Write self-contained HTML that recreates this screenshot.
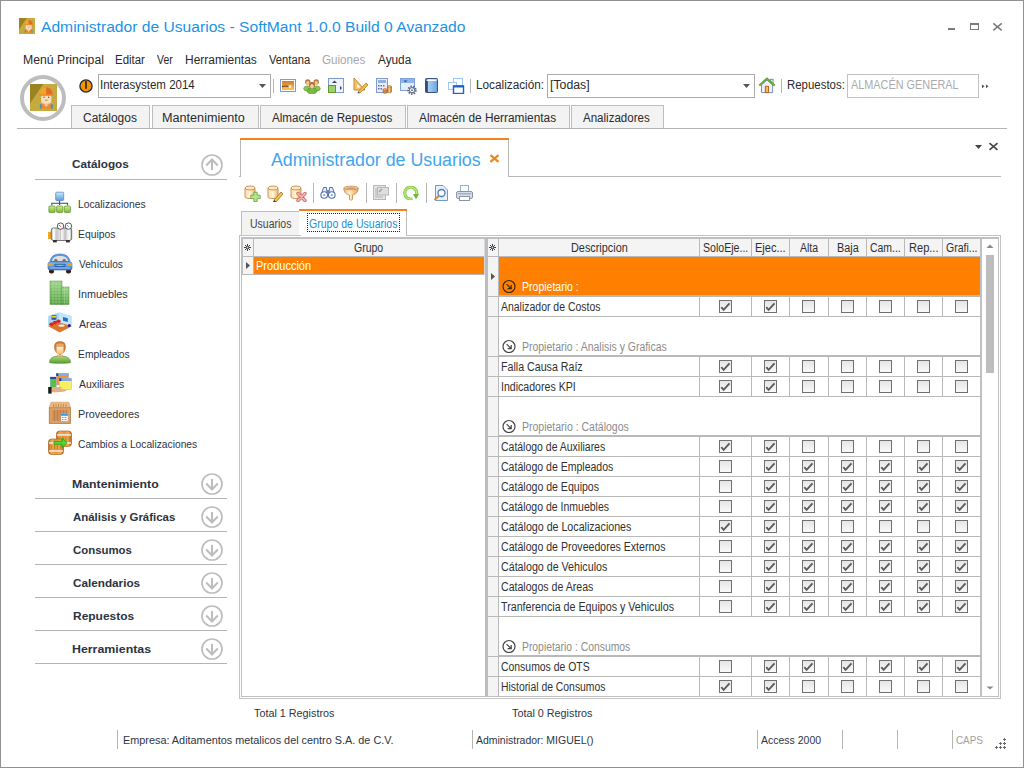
<!DOCTYPE html>
<html><head><meta charset="utf-8"><title>Administrador de Usuarios</title>
<style>
html,body{margin:0;padding:0;background:#fff;}
body{width:1024px;height:768px;position:relative;overflow:hidden;font-family:'Liberation Sans', sans-serif;}
</style></head><body>
<div style="position:absolute;left:0px;top:0px;width:1024px;height:768px;box-sizing:border-box;border:1px solid #919191;"></div>
<svg style="position:absolute;left:19px;top:18px" width="16" height="16" viewBox="0 0 27 27"><rect width="27" height="27" fill="#c5aa3f"/><path d="M0 0H13.2L0 19.6Z" fill="#9a8320"/>
<rect x="14" y="18.5" width="4.6" height="3" fill="#ecc9a0"/>
<rect x="10.5" y="20.2" width="11.6" height="4.4" fill="#f08a2c"/><path d="M14 20.2L16.3 23L18.6 20.2Z" fill="#f3d2a8"/>
<rect x="9.8" y="20.2" width="2" height="4.4" fill="#4b8fd0"/><rect x="20.8" y="20.2" width="2" height="4.4" fill="#4b8fd0"/>
<rect x="11.2" y="10" width="10.2" height="9.6" rx="3.2" fill="#f6dfb8"/>
<circle cx="14" cy="13.2" r="0.7" fill="#7a4a30"/><circle cx="18.6" cy="13.2" r="0.7" fill="#7a4a30"/><ellipse cx="16.3" cy="16.3" rx="1.6" ry="0.7" fill="#d8907e"/>
<path d="M9.8 11.2C9.8 6 12.5 3.4 16.25 3.4V11.2Z" fill="#f6a323"/><path d="M16.25 3.4C20 3.4 22.7 6 22.7 11.2H16.25Z" fill="#e8682a"/>
<rect x="9.4" y="10.2" width="13.7" height="1.6" fill="#ef8a28"/></svg>
<div style="position:absolute;left:948px;top:28px;width:7px;height:2px;background:#7a7a7a;"></div>
<div style="position:absolute;left:970px;top:23px;width:9px;height:7px;box-sizing:border-box;border:1px solid #7a7a7a;border-top-width:2px;"></div>
<svg style="position:absolute;left:992px;top:22px;" width="12" height="10" viewBox="0 0 12 10"><path d="M1.3 1.3L9.7 8.3M9.7 1.3L1.3 8.3" stroke="#7a7a7a" stroke-width="1.5"/></svg>
<svg style="position:absolute;left:20px;top:75px;" width="46" height="46" viewBox="0 0 46 46"><circle cx="23" cy="23" r="21" fill="#fff" stroke="#bdbdbd" stroke-width="4"/></svg>
<svg style="position:absolute;left:30px;top:84px;" width="27" height="27" viewBox="0 0 27 27"><rect width="27" height="27" fill="#c5aa3f"/><path d="M0 0H13.2L0 19.6Z" fill="#9a8320"/>
<rect x="14" y="18.5" width="4.6" height="3" fill="#ecc9a0"/>
<rect x="10.5" y="20.2" width="11.6" height="4.4" fill="#f08a2c"/><path d="M14 20.2L16.3 23L18.6 20.2Z" fill="#f3d2a8"/>
<rect x="9.8" y="20.2" width="2" height="4.4" fill="#4b8fd0"/><rect x="20.8" y="20.2" width="2" height="4.4" fill="#4b8fd0"/>
<rect x="11.2" y="10" width="10.2" height="9.6" rx="3.2" fill="#f6dfb8"/>
<circle cx="14" cy="13.2" r="0.7" fill="#7a4a30"/><circle cx="18.6" cy="13.2" r="0.7" fill="#7a4a30"/><ellipse cx="16.3" cy="16.3" rx="1.6" ry="0.7" fill="#d8907e"/>
<path d="M9.8 11.2C9.8 6 12.5 3.4 16.25 3.4V11.2Z" fill="#f6a323"/><path d="M16.25 3.4C20 3.4 22.7 6 22.7 11.2H16.25Z" fill="#e8682a"/>
<rect x="9.4" y="10.2" width="13.7" height="1.6" fill="#ef8a28"/></svg>
<svg style="position:absolute;left:79px;top:79px;" width="14" height="14" viewBox="0 0 14 14"><circle cx="7" cy="7" r="6.1" fill="#f59300" stroke="#1c2838" stroke-width="1.3"/><rect x="6" y="2" width="2" height="7.8" fill="#5a3400"/></svg>
<div style="position:absolute;left:98px;top:74px;width:173px;height:24px;box-sizing:border-box;border:1px solid #acacac;background:#fff;"></div>
<svg style="position:absolute;left:259px;top:84px;" width="8" height="5" viewBox="0 0 8 5"><path d="M0 0H7L3.5 4Z" fill="#555"/></svg>
<div style="position:absolute;left:273px;top:79px;width:1px;height:14px;background:#b5b5b5;"></div>
<svg style="position:absolute;left:280px;top:79px;" width="16" height="13" viewBox="0 0 16 13"><rect x="0.5" y="0.5" width="15" height="12" fill="#fff" stroke="#7f9ad4"/>
<defs><linearGradient id="gimg" x1="0" y1="0" x2="0" y2="1"><stop offset="0" stop-color="#d27a2a"/><stop offset="0.55" stop-color="#f0a040"/><stop offset="1" stop-color="#f6c860"/></linearGradient></defs>
<rect x="2" y="2" width="12" height="9" fill="url(#gimg)"/><path d="M2 7.5Q6 6.5 9 7.5" stroke="#5a3a20" stroke-width="1" fill="none"/><circle cx="10" cy="7.6" r="1.5" fill="#fff6d0"/></svg>
<svg style="position:absolute;left:303px;top:78px;" width="18" height="16" viewBox="0 0 18 16"><ellipse cx="4.5" cy="10.5" rx="3.8" ry="2.6" fill="#8cc456" stroke="#5a9a30" stroke-width="0.6"/><ellipse cx="13.5" cy="10.5" rx="3.8" ry="2.6" fill="#8cc456" stroke="#5a9a30" stroke-width="0.6"/>
<circle cx="4.8" cy="4" r="2.7" fill="#b9773e"/><ellipse cx="4.8" cy="5" rx="1.7" ry="2" fill="#f2c894"/><circle cx="13.2" cy="4" r="2.7" fill="#b9773e"/><ellipse cx="13.2" cy="5" rx="1.7" ry="2" fill="#f2c894"/>
<ellipse cx="9" cy="13" rx="4.8" ry="2.8" fill="#78b840" stroke="#4a8a28" stroke-width="0.6"/><circle cx="9" cy="7" r="3" fill="#b06a34"/><ellipse cx="9" cy="8.2" rx="1.9" ry="2.3" fill="#f4cc98"/></svg>
<svg style="position:absolute;left:328px;top:78px;" width="16" height="15" viewBox="0 0 16 15"><rect x="0.5" y="0.5" width="15" height="14" fill="#eef2fb" stroke="#7f9ad4"/>
<path d="M4 5L6.5 2.5L9 5Z" fill="#34446e"/><path d="M12 8L14 10L12 12Z" fill="#34446e"/>
<rect x="0.5" y="7.5" width="7" height="7" fill="#9fd070" stroke="#5e9a2e"/></svg>
<svg style="position:absolute;left:353px;top:77px;" width="16" height="17" viewBox="0 0 16 17"><path d="M1 1L1 13L12 13Z" fill="#f2c070" stroke="#c98a2e" stroke-width="1"/><path d="M4 7L4 10.5L7.5 10.5Z" fill="#fff"/>
<path d="M5 15L13 6L15 8L7 16Z" fill="#f4c04a" stroke="#b07a20" stroke-width="0.8"/><path d="M4.5 16.5L5 15L7 16Z" fill="#23345a"/></svg>
<svg style="position:absolute;left:376px;top:78px;" width="17" height="16" viewBox="0 0 17 16"><rect x="0.5" y="0.5" width="11" height="14" fill="#e8eefa" stroke="#7f9ad4"/><rect x="2" y="2" width="8" height="3" fill="#8fb0e0"/>
<g fill="#5a6ea0"><rect x="2" y="7" width="1.5" height="1.5"/><rect x="4.5" y="7" width="1.5" height="1.5"/><rect x="2" y="10" width="1.5" height="1.5"/><rect x="4.5" y="10" width="1.5" height="1.5"/></g>
<rect x="7" y="7" width="1.5" height="1.5" fill="#e04040"/>
<path d="M7 11.5V14.5C7 15.6 11 15.6 11 14.5V11.5Z" fill="#d08a40" stroke="#a05a20" stroke-width="0.6"/><ellipse cx="9" cy="11.5" rx="2" ry="0.9" fill="#f2c080" stroke="#a05a20" stroke-width="0.6"/>
<path d="M11.5 8.5V14C11.5 15.1 15.5 15.1 15.5 14V8.5Z" fill="#d9954a" stroke="#a05a20" stroke-width="0.6"/><ellipse cx="13.5" cy="8.5" rx="2" ry="0.9" fill="#f7d090" stroke="#a05a20" stroke-width="0.6"/><rect x="12.7" y="9.5" width="1" height="5" fill="#f7e0b0"/></svg>
<svg style="position:absolute;left:400px;top:78px;" width="17" height="17" viewBox="0 0 17 17"><rect x="0.5" y="0.5" width="14" height="12" fill="#e6eefb" stroke="#7fa0d8"/><rect x="1" y="1" width="13" height="4" fill="#8db6ea"/>
<path d="M3.5 2.5H7.5L5.5 4.5Z" fill="#34508a"/>
<circle cx="12" cy="12.2" r="3.6" fill="none" stroke="#5a6680" stroke-width="2.2" stroke-dasharray="1.4 1.1"/><circle cx="12" cy="12.2" r="2.6" fill="#fff" stroke="#5a6680" stroke-width="1"/><circle cx="12" cy="12.2" r="0.9" fill="#5a6680"/></svg>
<svg style="position:absolute;left:425px;top:78px;" width="14" height="15" viewBox="0 0 14 15"><defs><linearGradient id="gbook" x1="0" y1="0" x2="1" y2="0"><stop offset="0" stop-color="#2a3e6a"/><stop offset="0.2" stop-color="#485e90"/><stop offset="0.25" stop-color="#a8cff0"/><stop offset="1" stop-color="#6aa2dc"/></linearGradient></defs>
<rect x="0.5" y="0.5" width="12" height="14" rx="1" fill="url(#gbook)" stroke="#3c5284"/><rect x="1.5" y="1.5" width="10" height="1.4" fill="#fff"/></svg>
<svg style="position:absolute;left:448px;top:78px;" width="17" height="16" viewBox="0 0 17 16"><rect x="5.5" y="0.5" width="9" height="7" fill="#fff" stroke="#9cc8f8"/><rect x="0.5" y="4.5" width="8" height="7" fill="#fff" stroke="#9cc8f8"/>
<rect x="5.5" y="8" width="10" height="7.5" fill="#fff" stroke="#1b63c8" stroke-width="1.4"/><rect x="5" y="7.5" width="11" height="2" fill="#1b63c8"/></svg>
<div style="position:absolute;left:470px;top:79px;width:1px;height:14px;background:#b5b5b5;"></div>
<div style="position:absolute;left:547px;top:74px;width:208px;height:24px;box-sizing:border-box;border:1px solid #acacac;background:#fff;"></div>
<svg style="position:absolute;left:743px;top:84px;" width="8" height="5" viewBox="0 0 8 5"><path d="M0 0H7L3.5 4Z" fill="#555"/></svg>
<svg style="position:absolute;left:758px;top:76px;" width="18" height="18" viewBox="0 0 18 18"><rect x="12.3" y="3.3" width="2.8" height="6" fill="#e8eefa" stroke="#6a82c2" stroke-width="0.9"/>
<path d="M3.5 9V16.6H14.6V9L9 4Z" fill="#eef2fa" stroke="#6a82c2" stroke-width="0.9"/>
<rect x="7.3" y="10.3" width="3.2" height="6.3" fill="#f4b860" stroke="#b85a10" stroke-width="0.9"/>
<path d="M1.3 9.4L9 2.6L16.7 9.4" fill="none" stroke="#5aa018" stroke-width="2"/><path d="M2 9L9 2.8L16 9" fill="none" stroke="#b8e070" stroke-width="0.6" stroke-dasharray="0.8 0.8"/></svg>
<div style="position:absolute;left:781px;top:79px;width:1px;height:14px;background:#b5b5b5;"></div>
<div style="position:absolute;left:847px;top:74px;width:132px;height:24px;box-sizing:border-box;border:1px solid #c2c2c2;background:#fff;"></div>
<svg style="position:absolute;left:982px;top:84px;" width="8" height="6" viewBox="0 0 8 6"><path d="M0 0.5L2.6 2.3L0 4.3Z M4 0.5L6.6 2.3L4 4.3Z" fill="#555"/></svg>
<div style="position:absolute;left:71px;top:105px;width:79px;height:24px;box-sizing:border-box;border:1px solid #bdbdbd;border-bottom:none;background:#f3f3f3;"></div>
<div style="position:absolute;left:152px;top:105px;width:107px;height:24px;box-sizing:border-box;border:1px solid #bdbdbd;border-bottom:none;background:#f3f3f3;"></div>
<div style="position:absolute;left:260px;top:105px;width:146px;height:24px;box-sizing:border-box;border:1px solid #bdbdbd;border-bottom:none;background:#f3f3f3;"></div>
<div style="position:absolute;left:407px;top:105px;width:163px;height:24px;box-sizing:border-box;border:1px solid #bdbdbd;border-bottom:none;background:#f3f3f3;"></div>
<div style="position:absolute;left:571px;top:105px;width:93px;height:24px;box-sizing:border-box;border:1px solid #bdbdbd;border-bottom:none;background:#f3f3f3;"></div>
<div style="position:absolute;left:17px;top:128px;width:990px;height:1px;background:#b4b4b4;"></div>
<svg style="position:absolute;left:201px;top:154px;" width="22" height="22" viewBox="0 0 22 22"><circle cx="11" cy="11" r="10" fill="none" stroke="#bdbdbd" stroke-width="1.7"/><path d="M5.2 11.5L11 5.5L16.8 11.5" fill="none" stroke="#bdbdbd" stroke-width="2"/><path d="M11 5.5V16" stroke="#bdbdbd" stroke-width="2"/></svg>
<div style="position:absolute;left:35px;top:179px;width:192px;height:1px;background:#b4b4b4;"></div>
<svg style="position:absolute;left:201px;top:473px;" width="22" height="22" viewBox="0 0 22 22"><circle cx="11" cy="11" r="10" fill="none" stroke="#bdbdbd" stroke-width="1.7"/><path d="M5.2 10.5L11 16.5L16.8 10.5" fill="none" stroke="#bdbdbd" stroke-width="2"/><path d="M11 6V16.5" stroke="#bdbdbd" stroke-width="2"/></svg>
<div style="position:absolute;left:35px;top:498px;width:192px;height:1px;background:#b4b4b4;"></div>
<svg style="position:absolute;left:201px;top:506px;" width="22" height="22" viewBox="0 0 22 22"><circle cx="11" cy="11" r="10" fill="none" stroke="#bdbdbd" stroke-width="1.7"/><path d="M5.2 10.5L11 16.5L16.8 10.5" fill="none" stroke="#bdbdbd" stroke-width="2"/><path d="M11 6V16.5" stroke="#bdbdbd" stroke-width="2"/></svg>
<div style="position:absolute;left:35px;top:531px;width:192px;height:1px;background:#b4b4b4;"></div>
<svg style="position:absolute;left:201px;top:539px;" width="22" height="22" viewBox="0 0 22 22"><circle cx="11" cy="11" r="10" fill="none" stroke="#bdbdbd" stroke-width="1.7"/><path d="M5.2 10.5L11 16.5L16.8 10.5" fill="none" stroke="#bdbdbd" stroke-width="2"/><path d="M11 6V16.5" stroke="#bdbdbd" stroke-width="2"/></svg>
<div style="position:absolute;left:35px;top:564px;width:192px;height:1px;background:#b4b4b4;"></div>
<svg style="position:absolute;left:201px;top:572px;" width="22" height="22" viewBox="0 0 22 22"><circle cx="11" cy="11" r="10" fill="none" stroke="#bdbdbd" stroke-width="1.7"/><path d="M5.2 10.5L11 16.5L16.8 10.5" fill="none" stroke="#bdbdbd" stroke-width="2"/><path d="M11 6V16.5" stroke="#bdbdbd" stroke-width="2"/></svg>
<div style="position:absolute;left:35px;top:597px;width:192px;height:1px;background:#b4b4b4;"></div>
<svg style="position:absolute;left:201px;top:605px;" width="22" height="22" viewBox="0 0 22 22"><circle cx="11" cy="11" r="10" fill="none" stroke="#bdbdbd" stroke-width="1.7"/><path d="M5.2 10.5L11 16.5L16.8 10.5" fill="none" stroke="#bdbdbd" stroke-width="2"/><path d="M11 6V16.5" stroke="#bdbdbd" stroke-width="2"/></svg>
<div style="position:absolute;left:35px;top:630px;width:192px;height:1px;background:#b4b4b4;"></div>
<svg style="position:absolute;left:201px;top:638px;" width="22" height="22" viewBox="0 0 22 22"><circle cx="11" cy="11" r="10" fill="none" stroke="#bdbdbd" stroke-width="1.7"/><path d="M5.2 10.5L11 16.5L16.8 10.5" fill="none" stroke="#bdbdbd" stroke-width="2"/><path d="M11 6V16.5" stroke="#bdbdbd" stroke-width="2"/></svg>
<div style="position:absolute;left:35px;top:663px;width:192px;height:1px;background:#b4b4b4;"></div>
<svg style="position:absolute;left:44px;top:188px;" width="32" height="32" viewBox="0 0 32 32"><defs><linearGradient id="gloc" x1="0" y1="0" x2="0" y2="1"><stop offset="0" stop-color="#c8ecfc"/><stop offset="1" stop-color="#5a9ce0"/></linearGradient><linearGradient id="ggrn" x1="0" y1="0" x2="0" y2="1"><stop offset="0" stop-color="#d0f090"/><stop offset="1" stop-color="#78b828"/></linearGradient></defs>
<path d="M15.6 12.5V17M7.8 17.2V15.3H23.5V17.2" fill="none" stroke="#3c4a6a" stroke-width="1.1"/>
<rect x="11.7" y="4.2" width="8" height="8.3" rx="1" fill="url(#gloc)" stroke="#5a7ab0" stroke-width="0.7"/>
<rect x="4.9" y="18" width="6.2" height="6.6" rx="1" fill="url(#ggrn)" stroke="#5a8a30" stroke-width="0.7"/><rect x="12.6" y="18" width="6.2" height="6.6" rx="1" fill="url(#ggrn)" stroke="#5a8a30" stroke-width="0.7"/><rect x="20.2" y="18" width="6.2" height="6.6" rx="1" fill="url(#ggrn)" stroke="#5a8a30" stroke-width="0.7"/></svg>
<svg style="position:absolute;left:44px;top:218px;" width="32" height="32" viewBox="0 0 32 32"><defs><linearGradient id="gcomp" x1="0" y1="0" x2="1" y2="0"><stop offset="0" stop-color="#bbb"/><stop offset="0.12" stop-color="#fff"/><stop offset="0.3" stop-color="#ccc"/><stop offset="0.5" stop-color="#f4f4f4"/><stop offset="0.7" stop-color="#ccc"/><stop offset="0.88" stop-color="#fff"/><stop offset="1" stop-color="#aaa"/></linearGradient></defs>
<rect x="4" y="14" width="3.2" height="7" fill="#f2a81e"/>
<rect x="7.3" y="10" width="20.4" height="12.5" rx="2.2" fill="url(#gcomp)" stroke="#555" stroke-width="0.8"/>
<path d="M12 10.5V22M16.5 10.5V22M21 10.5V22" stroke="#b0b0b0" stroke-width="0.6"/>
<rect x="9" y="22" width="3.8" height="2.4" fill="#333"/><rect x="22" y="22" width="3.8" height="2.4" fill="#333"/>
<circle cx="16.5" cy="8.1" r="3.2" fill="#fff" stroke="#444" stroke-width="0.9"/><circle cx="24.4" cy="8.1" r="3.2" fill="#fff" stroke="#444" stroke-width="0.9"/>
<path d="M15.3 7.2L16.8 8.7" stroke="#e01010" stroke-width="1"/><path d="M23.2 7.2L24.7 8.7" stroke="#3a8ae0" stroke-width="1"/></svg>
<svg style="position:absolute;left:44px;top:248px;" width="32" height="32" viewBox="0 0 32 32"><defs><linearGradient id="gcar" x1="0" y1="0" x2="0" y2="1"><stop offset="0" stop-color="#8ac0f0"/><stop offset="1" stop-color="#3a78c8"/></linearGradient></defs>
<rect x="5" y="21" width="5" height="4.5" rx="2" fill="#3a1a10"/><rect x="22" y="21" width="5" height="4.5" rx="2" fill="#3a1a10"/>
<path d="M6 14C6.5 9 9.5 6 16 6C22.5 6 25.5 9 26 14Z" fill="#5a98e0" stroke="#3a70c0" stroke-width="0.6"/>
<path d="M8 13C8.5 9.5 11 8 16 8C21 8 23.5 9.5 24 13Z" fill="#e0e0e0"/><path d="M10 12.5C10.5 11 13 11 13.5 12.5M18.5 12.5C19 11 21.5 11 22 12.5" stroke="#908070" stroke-width="1"/>
<rect x="4" y="14" width="24" height="8" rx="2" fill="url(#gcar)" stroke="#3068b8" stroke-width="0.6"/>
<path d="M4.2 15.5H8.5V18H4.2Z" fill="#f0a020"/><path d="M23.5 15.5H27.8V18H23.5Z" fill="#f0a020"/><rect x="14.3" y="16.6" width="3.2" height="1.6" fill="#f0b030"/><rect x="11" y="16.2" width="10" height="2.4" fill="none" stroke="#1a4a98" stroke-width="0.7"/>
<path d="M6 20H26" stroke="#a8d0f8" stroke-width="0.8"/></svg>
<svg style="position:absolute;left:44px;top:278px;" width="32" height="32" viewBox="0 0 32 32"><defs><linearGradient id="gbld" x1="0" y1="0" x2="0" y2="1"><stop offset="0" stop-color="#9cd488"/><stop offset="1" stop-color="#4c9a3a"/></linearGradient></defs>
<rect x="6" y="3" width="12" height="23.5" fill="url(#gbld)" stroke="#5a8a48" stroke-width="0.5"/><rect x="17.5" y="9" width="7.5" height="17.5" fill="url(#gbld)" stroke="#5a8a48" stroke-width="0.5"/>
<path d="M6 6H18M6 9H18M6 12H18M6 15H18M6 18H18M6 21H18M6 24H18M17.5 12H25M17.5 15H25M17.5 18H25M17.5 21H25M17.5 24H25M9 3V26.5M12 3V26.5M15 3V26.5M20.5 9V26.5M23 9V26.5" stroke="#c8ecb8" stroke-width="0.45" opacity="0.8"/></svg>
<svg style="position:absolute;left:44px;top:308px;" width="32" height="32" viewBox="0 0 32 32"><path d="M4.2 18.3L15.8 24.6L27.9 18.3L15.8 12.8Z" fill="#d9782c"/>
<path d="M4.2 8L15.5 4.2V14.5L4.2 18.3Z" fill="#a6d6f2"/><path d="M15.5 4.2L27.9 8V18.3L15.5 14.5Z" fill="#c4e6fa"/>
<rect x="7.6" y="7.2" width="4.8" height="4.6" fill="#4050a0"/><rect x="7.8" y="8" width="4.4" height="1.6" fill="#f0d820"/>
<path d="M19 9L23.8 10.2V14L19 12.8Z" fill="#2a6ec0"/>
<ellipse cx="7.5" cy="16.2" rx="2.2" ry="1.8" fill="#e42020"/><ellipse cx="11" cy="14.6" rx="2.2" ry="1.8" fill="#e42020"/><ellipse cx="14.5" cy="13.2" rx="2.2" ry="1.8" fill="#e42020"/>
<ellipse cx="17.5" cy="17.6" rx="3.2" ry="1.2" fill="#f4f4f0"/><circle cx="25.3" cy="17.6" r="1.5" fill="#1822a8"/></svg>
<svg style="position:absolute;left:44px;top:338px;" width="32" height="32" viewBox="0 0 32 32"><defs><linearGradient id="gsh" x1="0" y1="0" x2="0" y2="1"><stop offset="0" stop-color="#a8dc78"/><stop offset="1" stop-color="#5aa030"/></linearGradient><linearGradient id="gfc" x1="0" y1="0" x2="0" y2="1"><stop offset="0" stop-color="#fff4d8"/><stop offset="1" stop-color="#f0b860"/></linearGradient></defs>
<path d="M5.5 24.5C5.5 19.5 10 18 16 18C22 18 26.5 19.5 26.5 24.5C26.5 25.5 5.5 25.5 5.5 24.5Z" fill="url(#gsh)" stroke="#4a7a30" stroke-width="0.6"/>
<path d="M13 16.5L16 19L19 16.5V18.5L16 20L13 18.5Z" fill="#e8a878"/>
<path d="M10.2 9C10.2 4.5 12.5 3.2 16 3.2C19.5 3.2 21.8 4.5 21.8 9C21.8 12 20.5 13.5 19.8 14.5L16 17.5L12.2 14.5C11.5 13.5 10.2 12 10.2 9Z" fill="#c77a3a"/>
<path d="M12.5 8.5H19.5V13.5C19.5 15 18 16.5 16 16.5C14 16.5 12.5 15 12.5 13.5Z" fill="url(#gfc)"/><path d="M12 6.5C13 5 19 5 20 6.5L19.5 8.5H12.5Z" fill="#e8a868"/></svg>
<svg style="position:absolute;left:44px;top:368px;" width="32" height="32" viewBox="0 0 32 32"><rect x="6.2" y="9" width="6" height="10.6" fill="#58c048" stroke="#8aa0c0" stroke-width="0.5"/><rect x="6.2" y="9" width="6" height="2" fill="#2a4a90"/>
<rect x="12.3" y="5.4" width="12.2" height="11.6" fill="#f09040" stroke="#9ab0d0" stroke-width="0.5"/><rect x="12.3" y="5.4" width="12.2" height="2.6" fill="#80b0e0"/><rect x="12.3" y="5.4" width="2" height="2.6" fill="#20408a"/>
<rect x="15.2" y="10.2" width="12.3" height="11.3" fill="#f8f060" stroke="#a8b8d0" stroke-width="0.5"/><rect x="15.2" y="10.2" width="12.3" height="2.8" fill="#80a8d8"/><rect x="15.2" y="10.2" width="2.2" height="2.8" fill="#20408a"/>
<path d="M7.5 20C10 19 14 18.8 17.5 19.2C18.5 19.8 17.5 20.6 16 20.8L22.5 21.8C22.8 22.8 21 23.5 19 23.8L10.5 24.5L7.5 24Z" fill="#e2b088"/>
<rect x="4.2" y="19" width="3.4" height="6.6" fill="#1a1a1a"/></svg>
<svg style="position:absolute;left:44px;top:398px;" width="32" height="32" viewBox="0 0 32 32"><path d="M7 4.2H24.8L26.5 9.5V25.5H5.2V9.5Z" fill="#e0aa74" stroke="#c08a50" stroke-width="0.5"/>
<path d="M7 4.2H24.8L26.2 9.5H5.6Z" fill="#e8b886"/><path d="M9.5 6V9M12 6V9M14.5 6V9M17 6V9M19.5 6V9M22 6V9" stroke="#c08850" stroke-width="0.8"/>
<rect x="5.5" y="9.8" width="21" height="15.5" fill="#d9a068" stroke="#b07a40" stroke-width="0.6"/>
<rect x="8.2" y="12.2" width="15.5" height="10.6" fill="#d09058"/><path d="M10.5 12.2V22.8M13.5 12.2V22.8M16.5 12.2V22.8M19.5 12.2V22.8M22.5 12.2V22.8" stroke="#b87a48" stroke-width="0.8"/>
<rect x="17" y="16" width="7" height="7" fill="#f4faff" stroke="#c0d0e0" stroke-width="0.4"/><rect x="17" y="16" width="7" height="1.8" fill="#2aa0f0"/>
<path d="M18 19.5H23M18 21.5H23" stroke="#7090a0" stroke-width="0.8" stroke-dasharray="1 0.5"/></svg>
<svg style="position:absolute;left:44px;top:428px;" width="32" height="32" viewBox="0 0 32 32"><defs><linearGradient id="gbar" x1="0" y1="0" x2="1" y2="0"><stop offset="0" stop-color="#b86818"/><stop offset="0.2" stop-color="#f0a850"/><stop offset="0.5" stop-color="#e89838"/><stop offset="0.8" stop-color="#f0a850"/><stop offset="1" stop-color="#b06010"/></linearGradient></defs>
<rect x="12.5" y="3" width="15" height="15.5" rx="3" fill="url(#gbar)" stroke="#a05a10" stroke-width="0.6"/><path d="M16 8.5V13.5M19 8.5V13.5M22 8.5V13.5M25 8.5V13.5" stroke="#b86a20" stroke-width="0.7"/>
<rect x="13" y="6.2" width="14" height="1.4" fill="#f0f0f0"/><rect x="13" y="14.3" width="14" height="1.4" fill="#f0f0f0"/>
<rect x="4.5" y="11" width="15" height="15.5" rx="3" fill="url(#gbar)" stroke="#a05a10" stroke-width="0.6"/><path d="M7.5 17V21.5M10.5 17V21.5M13.5 17V21.5M16.5 17V21.5" stroke="#b86a20" stroke-width="0.7"/>
<rect x="5" y="14.2" width="14" height="1.4" fill="#f0f0f0"/><rect x="5" y="22.3" width="14" height="1.4" fill="#f0f0f0"/>
<path d="M10 13.4H18.2V10L23 14.8L18.2 19.6V16.2H10Z" fill="#44e030" stroke="#1a9a18" stroke-width="0.7"/></svg>
<div style="position:absolute;left:240px;top:138px;width:269px;height:2px;background:#f58220;"></div>
<div style="position:absolute;left:240px;top:140px;width:1px;height:37px;background:#b8b8b8;"></div>
<div style="position:absolute;left:239px;top:176px;width:2px;height:1px;background:#b8b8b8;"></div>
<div style="position:absolute;left:508px;top:140px;width:1px;height:37px;background:#b8b8b8;"></div>
<div style="position:absolute;left:508px;top:176px;width:493px;height:1px;background:#b8b8b8;"></div>
<svg style="position:absolute;left:489px;top:154px;" width="11" height="9" viewBox="0 0 11 9"><path d="M1.5 1.2L9.5 7.8M9.5 1.2L1.5 7.8" stroke="#f0860c" stroke-width="2.2"/></svg>
<svg style="position:absolute;left:975px;top:145px;" width="7" height="4" viewBox="0 0 7 4"><path d="M0 0H7L3.5 4Z" fill="#444"/></svg>
<svg style="position:absolute;left:988px;top:142px;" width="11" height="9" viewBox="0 0 11 9"><path d="M1.5 1.2L9.5 7.8M9.5 1.2L1.5 7.8" stroke="#444" stroke-width="1.6"/></svg>
<svg style="position:absolute;left:244px;top:185px;" width="17" height="17" viewBox="0 0 17 17"><defs><linearGradient id="gcy" x1="0" y1="0" x2="1" y2="0"><stop offset="0" stop-color="#f7e0b0"/><stop offset="0.5" stop-color="#fff4d8"/><stop offset="1" stop-color="#e8b870"/></linearGradient></defs>
<path d="M1 3V12C1 14 11 14 11 12V3Z" fill="url(#gcy)" stroke="#c8884a" stroke-width="0.9"/><ellipse cx="6" cy="3" rx="5" ry="2" fill="#fbe9c4" stroke="#c8884a" stroke-width="0.9"/><path d="M9.8 7.2H13.2V10.2H16.2V13.6H13.2V16.6H9.8V13.6H6.8V10.2H9.8Z" fill="#b4e48a" stroke="#70a850" stroke-width="0.9"/></svg>
<svg style="position:absolute;left:267px;top:185px;" width="17" height="17" viewBox="0 0 17 17"><defs><linearGradient id="gcy" x1="0" y1="0" x2="1" y2="0"><stop offset="0" stop-color="#f7e0b0"/><stop offset="0.5" stop-color="#fff4d8"/><stop offset="1" stop-color="#e8b870"/></linearGradient></defs>
<path d="M1 3V12C1 14 11 14 11 12V3Z" fill="url(#gcy)" stroke="#c8884a" stroke-width="0.9"/><ellipse cx="6" cy="3" rx="5" ry="2" fill="#fbe9c4" stroke="#c8884a" stroke-width="0.9"/><path d="M7 15L14 7L16 9L9 17Z" fill="#f4c04a" stroke="#a07020" stroke-width="0.8"/><path d="M6 17L7 15L9 17Z" fill="#23345a"/></svg>
<svg style="position:absolute;left:290px;top:185px;" width="17" height="17" viewBox="0 0 17 17"><defs><linearGradient id="gcy" x1="0" y1="0" x2="1" y2="0"><stop offset="0" stop-color="#f7e0b0"/><stop offset="0.5" stop-color="#fff4d8"/><stop offset="1" stop-color="#e8b870"/></linearGradient></defs>
<path d="M1 3V12C1 14 11 14 11 12V3Z" fill="url(#gcy)" stroke="#c8884a" stroke-width="0.9"/><ellipse cx="6" cy="3" rx="5" ry="2" fill="#fbe9c4" stroke="#c8884a" stroke-width="0.9"/><path d="M8 8.5L15 15.5M15 8.5L8 15.5" stroke="#c86868" stroke-width="3.4" stroke-linecap="round"/><path d="M8 8.5L15 15.5M15 8.5L8 15.5" stroke="#f4b0b0" stroke-width="1.8" stroke-linecap="round"/></svg>
<div style="position:absolute;left:313px;top:183px;width:1px;height:20px;background:#b5b5b5;"></div>
<svg style="position:absolute;left:320px;top:186px;" width="16" height="13" viewBox="0 0 16 13"><path d="M1.5 8L3.5 1.5H6.5L7 8" fill="#e8eef8" stroke="#5670a8"/><path d="M9 8L9.5 1.5H12.5L14.5 8" fill="#e8eef8" stroke="#5670a8"/>
<circle cx="4.2" cy="9" r="3.3" fill="#fff" stroke="#5670a8" stroke-width="1.1"/><circle cx="11.8" cy="9" r="3.3" fill="#fff" stroke="#5670a8" stroke-width="1.1"/><circle cx="4.2" cy="9" r="1.1" fill="#6aa0e8"/><circle cx="11.8" cy="9" r="1.1" fill="#6aa0e8"/><rect x="7" y="4" width="2" height="3" fill="#7088b8"/></svg>
<svg style="position:absolute;left:343px;top:185px;" width="16" height="16" viewBox="0 0 16 16"><defs><linearGradient id="gfn" x1="0" y1="0" x2="1" y2="0"><stop offset="0" stop-color="#e8b070"/><stop offset="0.4" stop-color="#fff0d0"/><stop offset="1" stop-color="#e0a050"/></linearGradient></defs><path d="M0.8 3C0.8 8 4 9.5 6.5 10V14.5C6.5 15.3 9.5 15.3 9.5 14.5V10C12 9.5 15.2 8 15.2 3Z" fill="url(#gfn)" stroke="#d09050" stroke-width="0.9"/><ellipse cx="8" cy="3" rx="7" ry="1.8" fill="#f8e0c0" stroke="#d09050" stroke-width="0.9"/><ellipse cx="8" cy="3.2" rx="5" ry="1" fill="#d89a68"/></svg>
<div style="position:absolute;left:366px;top:183px;width:1px;height:20px;background:#b5b5b5;"></div>
<svg style="position:absolute;left:373px;top:185px;" width="16" height="15" viewBox="0 0 16 15"><rect x="0.5" y="0.5" width="12" height="14" fill="#e6e6e6" stroke="#b8b8b8"/><path d="M2 4H4M2 6H4M2 8H4M2 10H4M2 12H10" stroke="#b0b0b0"/><rect x="4.5" y="2.5" width="11" height="7.5" fill="#dedede" stroke="#b8b8b8"/><path d="M6 7L9 4" stroke="#999" stroke-width="1.2"/></svg>
<div style="position:absolute;left:396px;top:183px;width:1px;height:20px;background:#b5b5b5;"></div>
<svg style="position:absolute;left:403px;top:186px;" width="16" height="14" viewBox="0 0 16 14"><path d="M13.2 9.5A6 6 0 1 0 9.5 12.8" fill="none" stroke="#8ccf48" stroke-width="3.2"/><path d="M13.2 9.5A6 6 0 1 0 9.5 12.8" fill="none" stroke="#c8ee98" stroke-width="1"/><path d="M10 8H16L13 13.5Z" fill="#78b838"/></svg>
<div style="position:absolute;left:426px;top:183px;width:1px;height:20px;background:#b5b5b5;"></div>
<svg style="position:absolute;left:433px;top:185px;" width="16" height="16" viewBox="0 0 16 16"><path d="M2.5 0.5H10L14.5 5V15.5H2.5Z" fill="#e8f0fc" stroke="#6a9ad8"/><circle cx="8.5" cy="8" r="3.5" fill="#fff" stroke="#4a7ab8" stroke-width="1.3"/><path d="M6 10.5L1.5 15" stroke="#d88a30" stroke-width="2"/></svg>
<svg style="position:absolute;left:456px;top:185px;" width="17" height="16" viewBox="0 0 17 16"><rect x="4.5" y="0.5" width="8" height="6" fill="#fff" stroke="#9ab0d0"/><rect x="0.5" y="6.5" width="16" height="7" rx="1.5" fill="#d8dce4" stroke="#8a96a8"/>
<rect x="3.5" y="11.5" width="10" height="4" fill="#fff" stroke="#8a96a8"/><rect x="2" y="8" width="13" height="1.5" fill="#a8b0c0"/></svg>
<div style="position:absolute;left:241px;top:211px;width:59px;height:25px;box-sizing:border-box;border:1px solid #bdbdbd;border-bottom:none;background:#f3f3f3;"></div>
<div style="position:absolute;left:299px;top:211px;width:108px;height:25px;box-sizing:border-box;border-right:1px solid #bdbdbd;background:#fff;"></div>
<div style="position:absolute;left:299px;top:209px;width:108px;height:2px;background:#f58220;"></div>
<div style="position:absolute;left:307px;top:213px;width:93px;height:19px;box-sizing:border-box;border:1px dotted #222;"></div>
<div style="position:absolute;left:239px;top:235px;width:62px;height:1px;background:#c4c4c4;"></div>
<div style="position:absolute;left:406px;top:235px;width:595px;height:1px;background:#c4c4c4;"></div>
<div style="position:absolute;left:239px;top:235px;width:1px;height:464px;background:#c4c4c4;"></div>
<div style="position:absolute;left:1000px;top:235px;width:1px;height:464px;background:#c4c4c4;"></div>
<div style="position:absolute;left:239px;top:698px;width:762px;height:1px;background:#c4c4c4;"></div>
<div style="position:absolute;left:241px;top:237px;width:758px;height:460px;box-sizing:border-box;border:1px solid #c0c0c0;"></div>
<div style="position:absolute;left:242px;top:238px;width:756px;height:1px;background:#c0c0c0;"></div>
<div style="position:absolute;left:242px;top:239px;width:1px;height:36px;background:#c0c0c0;"></div>
<div style="position:absolute;left:243px;top:239px;width:241px;height:17px;background:#f4f4f4;"></div>
<div style="position:absolute;left:243px;top:256px;width:241px;height:1px;background:#b9b9b9;"></div>
<div style="position:absolute;left:253px;top:239px;width:1px;height:35px;background:#b9b9b9;"></div>
<div style="position:absolute;left:243px;top:257px;width:10px;height:17px;background:#f4f4f4;"></div>
<div style="position:absolute;left:254px;top:257px;width:230px;height:17px;background:#ff7f00;"></div>
<div style="position:absolute;left:243px;top:274px;width:241px;height:1px;background:#b9b9b9;"></div>
<div style="position:absolute;left:484px;top:239px;width:1px;height:36px;background:#d3d9df;"></div>
<svg style="position:absolute;left:243px;top:243px;" width="10" height="10" viewBox="0 0 10 10"><path d="M4.5 1V8M1 4.5H8M2 2L7 7M7 2L2 7" stroke="#404040" stroke-width="1"/><circle cx="4.5" cy="4.5" r="0.9" fill="#d8d8d8"/></svg>
<svg style="position:absolute;left:246px;top:262px;" width="5" height="8" viewBox="0 0 5 8"><path d="M0 0L4 3.5L0 7Z" fill="#555"/></svg>
<div style="position:absolute;left:485px;top:237px;width:3px;height:460px;background:#bdbdbd;"></div>
<div style="position:absolute;left:488px;top:239px;width:493px;height:17px;background:#f4f4f4;"></div>
<div style="position:absolute;left:488px;top:256px;width:493px;height:1px;background:#b9b9b9;"></div>
<svg style="position:absolute;left:488px;top:243px;" width="10" height="10" viewBox="0 0 10 10"><path d="M4.5 1V8M1 4.5H8M2 2L7 7M7 2L2 7" stroke="#404040" stroke-width="1"/><circle cx="4.5" cy="4.5" r="0.9" fill="#d8d8d8"/></svg>
<div style="position:absolute;left:699px;top:239px;width:1px;height:17px;background:#b9b9b9;"></div>
<div style="position:absolute;left:751px;top:239px;width:1px;height:17px;background:#b9b9b9;"></div>
<div style="position:absolute;left:789px;top:239px;width:1px;height:17px;background:#b9b9b9;"></div>
<div style="position:absolute;left:828px;top:239px;width:1px;height:17px;background:#b9b9b9;"></div>
<div style="position:absolute;left:866px;top:239px;width:1px;height:17px;background:#b9b9b9;"></div>
<div style="position:absolute;left:904px;top:239px;width:1px;height:17px;background:#b9b9b9;"></div>
<div style="position:absolute;left:942px;top:239px;width:1px;height:17px;background:#b9b9b9;"></div>
<div style="position:absolute;left:498px;top:239px;width:1px;height:458px;background:#b9b9b9;"></div>
<div style="position:absolute;left:980px;top:237px;width:2px;height:459px;background:#c0c0c0;"></div>
<div style="position:absolute;left:488px;top:257px;width:10px;height:439px;background:#f4f4f4;"></div>
<div style="position:absolute;left:499px;top:257px;width:481px;height:38px;background:#ff7f00;"></div>
<svg style="position:absolute;left:491px;top:273px;" width="5" height="8" viewBox="0 0 5 8"><path d="M0 0L4 3.5L0 7Z" fill="#555"/></svg>
<svg style="position:absolute;left:502px;top:279px;" width="14" height="14" viewBox="0 0 14 14"><circle cx="7" cy="7.5" r="6" fill="none" stroke="#3a2a10" stroke-width="1.2"/><path d="M4.6 5.1L9 9.5M9.2 6V9.6H5.6" fill="none" stroke="#3a2a10" stroke-width="1.2"/></svg>
<div style="position:absolute;left:488px;top:296px;width:10px;height:1px;background:#b9b9b9;"></div>
<div style="position:absolute;left:498px;top:295px;width:483px;height:2px;background:#b9b9b9;"></div>
<svg style="position:absolute;left:719px;top:300px;" width="13" height="13" viewBox="0 0 13 13"><defs><linearGradient id="gcb" x1="0" y1="0" x2="0" y2="1"><stop offset="0" stop-color="#e4e4e4"/><stop offset="1" stop-color="#fafafa"/></linearGradient></defs><rect x="0.5" y="0.5" width="12" height="12" fill="url(#gcb)" stroke="#707070"/><path d="M2.3 7.2L4.6 9.8L10.5 3.4" fill="none" stroke="#5c5c5c" stroke-width="1.9"/></svg>
<svg style="position:absolute;left:764px;top:300px;" width="13" height="13" viewBox="0 0 13 13"><defs><linearGradient id="gcb" x1="0" y1="0" x2="0" y2="1"><stop offset="0" stop-color="#e4e4e4"/><stop offset="1" stop-color="#fafafa"/></linearGradient></defs><rect x="0.5" y="0.5" width="12" height="12" fill="url(#gcb)" stroke="#707070"/><path d="M2.3 7.2L4.6 9.8L10.5 3.4" fill="none" stroke="#5c5c5c" stroke-width="1.9"/></svg>
<svg style="position:absolute;left:802px;top:300px;" width="13" height="13" viewBox="0 0 13 13"><defs><linearGradient id="gcb" x1="0" y1="0" x2="0" y2="1"><stop offset="0" stop-color="#e4e4e4"/><stop offset="1" stop-color="#fafafa"/></linearGradient></defs><rect x="0.5" y="0.5" width="12" height="12" fill="url(#gcb)" stroke="#707070"/></svg>
<svg style="position:absolute;left:841px;top:300px;" width="13" height="13" viewBox="0 0 13 13"><defs><linearGradient id="gcb" x1="0" y1="0" x2="0" y2="1"><stop offset="0" stop-color="#e4e4e4"/><stop offset="1" stop-color="#fafafa"/></linearGradient></defs><rect x="0.5" y="0.5" width="12" height="12" fill="url(#gcb)" stroke="#707070"/></svg>
<svg style="position:absolute;left:879px;top:300px;" width="13" height="13" viewBox="0 0 13 13"><defs><linearGradient id="gcb" x1="0" y1="0" x2="0" y2="1"><stop offset="0" stop-color="#e4e4e4"/><stop offset="1" stop-color="#fafafa"/></linearGradient></defs><rect x="0.5" y="0.5" width="12" height="12" fill="url(#gcb)" stroke="#707070"/></svg>
<svg style="position:absolute;left:917px;top:300px;" width="13" height="13" viewBox="0 0 13 13"><defs><linearGradient id="gcb" x1="0" y1="0" x2="0" y2="1"><stop offset="0" stop-color="#e4e4e4"/><stop offset="1" stop-color="#fafafa"/></linearGradient></defs><rect x="0.5" y="0.5" width="12" height="12" fill="url(#gcb)" stroke="#707070"/></svg>
<svg style="position:absolute;left:955px;top:300px;" width="13" height="13" viewBox="0 0 13 13"><defs><linearGradient id="gcb" x1="0" y1="0" x2="0" y2="1"><stop offset="0" stop-color="#e4e4e4"/><stop offset="1" stop-color="#fafafa"/></linearGradient></defs><rect x="0.5" y="0.5" width="12" height="12" fill="url(#gcb)" stroke="#707070"/></svg>
<div style="position:absolute;left:699px;top:297px;width:1px;height:19px;background:#b9b9b9;"></div>
<div style="position:absolute;left:751px;top:297px;width:1px;height:19px;background:#b9b9b9;"></div>
<div style="position:absolute;left:789px;top:297px;width:1px;height:19px;background:#b9b9b9;"></div>
<div style="position:absolute;left:828px;top:297px;width:1px;height:19px;background:#b9b9b9;"></div>
<div style="position:absolute;left:866px;top:297px;width:1px;height:19px;background:#b9b9b9;"></div>
<div style="position:absolute;left:904px;top:297px;width:1px;height:19px;background:#b9b9b9;"></div>
<div style="position:absolute;left:942px;top:297px;width:1px;height:19px;background:#b9b9b9;"></div>
<div style="position:absolute;left:488px;top:316px;width:493px;height:1px;background:#b9b9b9;"></div>
<svg style="position:absolute;left:502px;top:339px;" width="14" height="14" viewBox="0 0 14 14"><circle cx="7" cy="7.5" r="6" fill="none" stroke="#444" stroke-width="1.2"/><path d="M4.6 5.1L9 9.5M9.2 6V9.6H5.6" fill="none" stroke="#444" stroke-width="1.2"/></svg>
<div style="position:absolute;left:488px;top:356px;width:10px;height:1px;background:#b9b9b9;"></div>
<div style="position:absolute;left:498px;top:355px;width:483px;height:2px;background:#b9b9b9;"></div>
<svg style="position:absolute;left:719px;top:360px;" width="13" height="13" viewBox="0 0 13 13"><defs><linearGradient id="gcb" x1="0" y1="0" x2="0" y2="1"><stop offset="0" stop-color="#e4e4e4"/><stop offset="1" stop-color="#fafafa"/></linearGradient></defs><rect x="0.5" y="0.5" width="12" height="12" fill="url(#gcb)" stroke="#707070"/><path d="M2.3 7.2L4.6 9.8L10.5 3.4" fill="none" stroke="#5c5c5c" stroke-width="1.9"/></svg>
<svg style="position:absolute;left:764px;top:360px;" width="13" height="13" viewBox="0 0 13 13"><defs><linearGradient id="gcb" x1="0" y1="0" x2="0" y2="1"><stop offset="0" stop-color="#e4e4e4"/><stop offset="1" stop-color="#fafafa"/></linearGradient></defs><rect x="0.5" y="0.5" width="12" height="12" fill="url(#gcb)" stroke="#707070"/><path d="M2.3 7.2L4.6 9.8L10.5 3.4" fill="none" stroke="#5c5c5c" stroke-width="1.9"/></svg>
<svg style="position:absolute;left:802px;top:360px;" width="13" height="13" viewBox="0 0 13 13"><defs><linearGradient id="gcb" x1="0" y1="0" x2="0" y2="1"><stop offset="0" stop-color="#e4e4e4"/><stop offset="1" stop-color="#fafafa"/></linearGradient></defs><rect x="0.5" y="0.5" width="12" height="12" fill="url(#gcb)" stroke="#707070"/></svg>
<svg style="position:absolute;left:841px;top:360px;" width="13" height="13" viewBox="0 0 13 13"><defs><linearGradient id="gcb" x1="0" y1="0" x2="0" y2="1"><stop offset="0" stop-color="#e4e4e4"/><stop offset="1" stop-color="#fafafa"/></linearGradient></defs><rect x="0.5" y="0.5" width="12" height="12" fill="url(#gcb)" stroke="#707070"/></svg>
<svg style="position:absolute;left:879px;top:360px;" width="13" height="13" viewBox="0 0 13 13"><defs><linearGradient id="gcb" x1="0" y1="0" x2="0" y2="1"><stop offset="0" stop-color="#e4e4e4"/><stop offset="1" stop-color="#fafafa"/></linearGradient></defs><rect x="0.5" y="0.5" width="12" height="12" fill="url(#gcb)" stroke="#707070"/></svg>
<svg style="position:absolute;left:917px;top:360px;" width="13" height="13" viewBox="0 0 13 13"><defs><linearGradient id="gcb" x1="0" y1="0" x2="0" y2="1"><stop offset="0" stop-color="#e4e4e4"/><stop offset="1" stop-color="#fafafa"/></linearGradient></defs><rect x="0.5" y="0.5" width="12" height="12" fill="url(#gcb)" stroke="#707070"/></svg>
<svg style="position:absolute;left:955px;top:360px;" width="13" height="13" viewBox="0 0 13 13"><defs><linearGradient id="gcb" x1="0" y1="0" x2="0" y2="1"><stop offset="0" stop-color="#e4e4e4"/><stop offset="1" stop-color="#fafafa"/></linearGradient></defs><rect x="0.5" y="0.5" width="12" height="12" fill="url(#gcb)" stroke="#707070"/></svg>
<div style="position:absolute;left:699px;top:357px;width:1px;height:19px;background:#b9b9b9;"></div>
<div style="position:absolute;left:751px;top:357px;width:1px;height:19px;background:#b9b9b9;"></div>
<div style="position:absolute;left:789px;top:357px;width:1px;height:19px;background:#b9b9b9;"></div>
<div style="position:absolute;left:828px;top:357px;width:1px;height:19px;background:#b9b9b9;"></div>
<div style="position:absolute;left:866px;top:357px;width:1px;height:19px;background:#b9b9b9;"></div>
<div style="position:absolute;left:904px;top:357px;width:1px;height:19px;background:#b9b9b9;"></div>
<div style="position:absolute;left:942px;top:357px;width:1px;height:19px;background:#b9b9b9;"></div>
<div style="position:absolute;left:488px;top:376px;width:493px;height:1px;background:#b9b9b9;"></div>
<svg style="position:absolute;left:719px;top:380px;" width="13" height="13" viewBox="0 0 13 13"><defs><linearGradient id="gcb" x1="0" y1="0" x2="0" y2="1"><stop offset="0" stop-color="#e4e4e4"/><stop offset="1" stop-color="#fafafa"/></linearGradient></defs><rect x="0.5" y="0.5" width="12" height="12" fill="url(#gcb)" stroke="#707070"/><path d="M2.3 7.2L4.6 9.8L10.5 3.4" fill="none" stroke="#5c5c5c" stroke-width="1.9"/></svg>
<svg style="position:absolute;left:764px;top:380px;" width="13" height="13" viewBox="0 0 13 13"><defs><linearGradient id="gcb" x1="0" y1="0" x2="0" y2="1"><stop offset="0" stop-color="#e4e4e4"/><stop offset="1" stop-color="#fafafa"/></linearGradient></defs><rect x="0.5" y="0.5" width="12" height="12" fill="url(#gcb)" stroke="#707070"/><path d="M2.3 7.2L4.6 9.8L10.5 3.4" fill="none" stroke="#5c5c5c" stroke-width="1.9"/></svg>
<svg style="position:absolute;left:802px;top:380px;" width="13" height="13" viewBox="0 0 13 13"><defs><linearGradient id="gcb" x1="0" y1="0" x2="0" y2="1"><stop offset="0" stop-color="#e4e4e4"/><stop offset="1" stop-color="#fafafa"/></linearGradient></defs><rect x="0.5" y="0.5" width="12" height="12" fill="url(#gcb)" stroke="#707070"/></svg>
<svg style="position:absolute;left:841px;top:380px;" width="13" height="13" viewBox="0 0 13 13"><defs><linearGradient id="gcb" x1="0" y1="0" x2="0" y2="1"><stop offset="0" stop-color="#e4e4e4"/><stop offset="1" stop-color="#fafafa"/></linearGradient></defs><rect x="0.5" y="0.5" width="12" height="12" fill="url(#gcb)" stroke="#707070"/></svg>
<svg style="position:absolute;left:879px;top:380px;" width="13" height="13" viewBox="0 0 13 13"><defs><linearGradient id="gcb" x1="0" y1="0" x2="0" y2="1"><stop offset="0" stop-color="#e4e4e4"/><stop offset="1" stop-color="#fafafa"/></linearGradient></defs><rect x="0.5" y="0.5" width="12" height="12" fill="url(#gcb)" stroke="#707070"/></svg>
<svg style="position:absolute;left:917px;top:380px;" width="13" height="13" viewBox="0 0 13 13"><defs><linearGradient id="gcb" x1="0" y1="0" x2="0" y2="1"><stop offset="0" stop-color="#e4e4e4"/><stop offset="1" stop-color="#fafafa"/></linearGradient></defs><rect x="0.5" y="0.5" width="12" height="12" fill="url(#gcb)" stroke="#707070"/></svg>
<svg style="position:absolute;left:955px;top:380px;" width="13" height="13" viewBox="0 0 13 13"><defs><linearGradient id="gcb" x1="0" y1="0" x2="0" y2="1"><stop offset="0" stop-color="#e4e4e4"/><stop offset="1" stop-color="#fafafa"/></linearGradient></defs><rect x="0.5" y="0.5" width="12" height="12" fill="url(#gcb)" stroke="#707070"/></svg>
<div style="position:absolute;left:699px;top:377px;width:1px;height:19px;background:#b9b9b9;"></div>
<div style="position:absolute;left:751px;top:377px;width:1px;height:19px;background:#b9b9b9;"></div>
<div style="position:absolute;left:789px;top:377px;width:1px;height:19px;background:#b9b9b9;"></div>
<div style="position:absolute;left:828px;top:377px;width:1px;height:19px;background:#b9b9b9;"></div>
<div style="position:absolute;left:866px;top:377px;width:1px;height:19px;background:#b9b9b9;"></div>
<div style="position:absolute;left:904px;top:377px;width:1px;height:19px;background:#b9b9b9;"></div>
<div style="position:absolute;left:942px;top:377px;width:1px;height:19px;background:#b9b9b9;"></div>
<div style="position:absolute;left:488px;top:396px;width:493px;height:1px;background:#b9b9b9;"></div>
<svg style="position:absolute;left:502px;top:419px;" width="14" height="14" viewBox="0 0 14 14"><circle cx="7" cy="7.5" r="6" fill="none" stroke="#444" stroke-width="1.2"/><path d="M4.6 5.1L9 9.5M9.2 6V9.6H5.6" fill="none" stroke="#444" stroke-width="1.2"/></svg>
<div style="position:absolute;left:488px;top:436px;width:10px;height:1px;background:#b9b9b9;"></div>
<div style="position:absolute;left:498px;top:435px;width:483px;height:2px;background:#b9b9b9;"></div>
<svg style="position:absolute;left:719px;top:440px;" width="13" height="13" viewBox="0 0 13 13"><defs><linearGradient id="gcb" x1="0" y1="0" x2="0" y2="1"><stop offset="0" stop-color="#e4e4e4"/><stop offset="1" stop-color="#fafafa"/></linearGradient></defs><rect x="0.5" y="0.5" width="12" height="12" fill="url(#gcb)" stroke="#707070"/><path d="M2.3 7.2L4.6 9.8L10.5 3.4" fill="none" stroke="#5c5c5c" stroke-width="1.9"/></svg>
<svg style="position:absolute;left:764px;top:440px;" width="13" height="13" viewBox="0 0 13 13"><defs><linearGradient id="gcb" x1="0" y1="0" x2="0" y2="1"><stop offset="0" stop-color="#e4e4e4"/><stop offset="1" stop-color="#fafafa"/></linearGradient></defs><rect x="0.5" y="0.5" width="12" height="12" fill="url(#gcb)" stroke="#707070"/><path d="M2.3 7.2L4.6 9.8L10.5 3.4" fill="none" stroke="#5c5c5c" stroke-width="1.9"/></svg>
<svg style="position:absolute;left:802px;top:440px;" width="13" height="13" viewBox="0 0 13 13"><defs><linearGradient id="gcb" x1="0" y1="0" x2="0" y2="1"><stop offset="0" stop-color="#e4e4e4"/><stop offset="1" stop-color="#fafafa"/></linearGradient></defs><rect x="0.5" y="0.5" width="12" height="12" fill="url(#gcb)" stroke="#707070"/></svg>
<svg style="position:absolute;left:841px;top:440px;" width="13" height="13" viewBox="0 0 13 13"><defs><linearGradient id="gcb" x1="0" y1="0" x2="0" y2="1"><stop offset="0" stop-color="#e4e4e4"/><stop offset="1" stop-color="#fafafa"/></linearGradient></defs><rect x="0.5" y="0.5" width="12" height="12" fill="url(#gcb)" stroke="#707070"/></svg>
<svg style="position:absolute;left:879px;top:440px;" width="13" height="13" viewBox="0 0 13 13"><defs><linearGradient id="gcb" x1="0" y1="0" x2="0" y2="1"><stop offset="0" stop-color="#e4e4e4"/><stop offset="1" stop-color="#fafafa"/></linearGradient></defs><rect x="0.5" y="0.5" width="12" height="12" fill="url(#gcb)" stroke="#707070"/></svg>
<svg style="position:absolute;left:917px;top:440px;" width="13" height="13" viewBox="0 0 13 13"><defs><linearGradient id="gcb" x1="0" y1="0" x2="0" y2="1"><stop offset="0" stop-color="#e4e4e4"/><stop offset="1" stop-color="#fafafa"/></linearGradient></defs><rect x="0.5" y="0.5" width="12" height="12" fill="url(#gcb)" stroke="#707070"/></svg>
<svg style="position:absolute;left:955px;top:440px;" width="13" height="13" viewBox="0 0 13 13"><defs><linearGradient id="gcb" x1="0" y1="0" x2="0" y2="1"><stop offset="0" stop-color="#e4e4e4"/><stop offset="1" stop-color="#fafafa"/></linearGradient></defs><rect x="0.5" y="0.5" width="12" height="12" fill="url(#gcb)" stroke="#707070"/></svg>
<div style="position:absolute;left:699px;top:437px;width:1px;height:19px;background:#b9b9b9;"></div>
<div style="position:absolute;left:751px;top:437px;width:1px;height:19px;background:#b9b9b9;"></div>
<div style="position:absolute;left:789px;top:437px;width:1px;height:19px;background:#b9b9b9;"></div>
<div style="position:absolute;left:828px;top:437px;width:1px;height:19px;background:#b9b9b9;"></div>
<div style="position:absolute;left:866px;top:437px;width:1px;height:19px;background:#b9b9b9;"></div>
<div style="position:absolute;left:904px;top:437px;width:1px;height:19px;background:#b9b9b9;"></div>
<div style="position:absolute;left:942px;top:437px;width:1px;height:19px;background:#b9b9b9;"></div>
<div style="position:absolute;left:488px;top:456px;width:493px;height:1px;background:#b9b9b9;"></div>
<svg style="position:absolute;left:719px;top:460px;" width="13" height="13" viewBox="0 0 13 13"><defs><linearGradient id="gcb" x1="0" y1="0" x2="0" y2="1"><stop offset="0" stop-color="#e4e4e4"/><stop offset="1" stop-color="#fafafa"/></linearGradient></defs><rect x="0.5" y="0.5" width="12" height="12" fill="url(#gcb)" stroke="#707070"/></svg>
<svg style="position:absolute;left:764px;top:460px;" width="13" height="13" viewBox="0 0 13 13"><defs><linearGradient id="gcb" x1="0" y1="0" x2="0" y2="1"><stop offset="0" stop-color="#e4e4e4"/><stop offset="1" stop-color="#fafafa"/></linearGradient></defs><rect x="0.5" y="0.5" width="12" height="12" fill="url(#gcb)" stroke="#707070"/><path d="M2.3 7.2L4.6 9.8L10.5 3.4" fill="none" stroke="#5c5c5c" stroke-width="1.9"/></svg>
<svg style="position:absolute;left:802px;top:460px;" width="13" height="13" viewBox="0 0 13 13"><defs><linearGradient id="gcb" x1="0" y1="0" x2="0" y2="1"><stop offset="0" stop-color="#e4e4e4"/><stop offset="1" stop-color="#fafafa"/></linearGradient></defs><rect x="0.5" y="0.5" width="12" height="12" fill="url(#gcb)" stroke="#707070"/><path d="M2.3 7.2L4.6 9.8L10.5 3.4" fill="none" stroke="#5c5c5c" stroke-width="1.9"/></svg>
<svg style="position:absolute;left:841px;top:460px;" width="13" height="13" viewBox="0 0 13 13"><defs><linearGradient id="gcb" x1="0" y1="0" x2="0" y2="1"><stop offset="0" stop-color="#e4e4e4"/><stop offset="1" stop-color="#fafafa"/></linearGradient></defs><rect x="0.5" y="0.5" width="12" height="12" fill="url(#gcb)" stroke="#707070"/><path d="M2.3 7.2L4.6 9.8L10.5 3.4" fill="none" stroke="#5c5c5c" stroke-width="1.9"/></svg>
<svg style="position:absolute;left:879px;top:460px;" width="13" height="13" viewBox="0 0 13 13"><defs><linearGradient id="gcb" x1="0" y1="0" x2="0" y2="1"><stop offset="0" stop-color="#e4e4e4"/><stop offset="1" stop-color="#fafafa"/></linearGradient></defs><rect x="0.5" y="0.5" width="12" height="12" fill="url(#gcb)" stroke="#707070"/><path d="M2.3 7.2L4.6 9.8L10.5 3.4" fill="none" stroke="#5c5c5c" stroke-width="1.9"/></svg>
<svg style="position:absolute;left:917px;top:460px;" width="13" height="13" viewBox="0 0 13 13"><defs><linearGradient id="gcb" x1="0" y1="0" x2="0" y2="1"><stop offset="0" stop-color="#e4e4e4"/><stop offset="1" stop-color="#fafafa"/></linearGradient></defs><rect x="0.5" y="0.5" width="12" height="12" fill="url(#gcb)" stroke="#707070"/><path d="M2.3 7.2L4.6 9.8L10.5 3.4" fill="none" stroke="#5c5c5c" stroke-width="1.9"/></svg>
<svg style="position:absolute;left:955px;top:460px;" width="13" height="13" viewBox="0 0 13 13"><defs><linearGradient id="gcb" x1="0" y1="0" x2="0" y2="1"><stop offset="0" stop-color="#e4e4e4"/><stop offset="1" stop-color="#fafafa"/></linearGradient></defs><rect x="0.5" y="0.5" width="12" height="12" fill="url(#gcb)" stroke="#707070"/><path d="M2.3 7.2L4.6 9.8L10.5 3.4" fill="none" stroke="#5c5c5c" stroke-width="1.9"/></svg>
<div style="position:absolute;left:699px;top:457px;width:1px;height:19px;background:#b9b9b9;"></div>
<div style="position:absolute;left:751px;top:457px;width:1px;height:19px;background:#b9b9b9;"></div>
<div style="position:absolute;left:789px;top:457px;width:1px;height:19px;background:#b9b9b9;"></div>
<div style="position:absolute;left:828px;top:457px;width:1px;height:19px;background:#b9b9b9;"></div>
<div style="position:absolute;left:866px;top:457px;width:1px;height:19px;background:#b9b9b9;"></div>
<div style="position:absolute;left:904px;top:457px;width:1px;height:19px;background:#b9b9b9;"></div>
<div style="position:absolute;left:942px;top:457px;width:1px;height:19px;background:#b9b9b9;"></div>
<div style="position:absolute;left:488px;top:476px;width:493px;height:1px;background:#b9b9b9;"></div>
<svg style="position:absolute;left:719px;top:480px;" width="13" height="13" viewBox="0 0 13 13"><defs><linearGradient id="gcb" x1="0" y1="0" x2="0" y2="1"><stop offset="0" stop-color="#e4e4e4"/><stop offset="1" stop-color="#fafafa"/></linearGradient></defs><rect x="0.5" y="0.5" width="12" height="12" fill="url(#gcb)" stroke="#707070"/></svg>
<svg style="position:absolute;left:764px;top:480px;" width="13" height="13" viewBox="0 0 13 13"><defs><linearGradient id="gcb" x1="0" y1="0" x2="0" y2="1"><stop offset="0" stop-color="#e4e4e4"/><stop offset="1" stop-color="#fafafa"/></linearGradient></defs><rect x="0.5" y="0.5" width="12" height="12" fill="url(#gcb)" stroke="#707070"/><path d="M2.3 7.2L4.6 9.8L10.5 3.4" fill="none" stroke="#5c5c5c" stroke-width="1.9"/></svg>
<svg style="position:absolute;left:802px;top:480px;" width="13" height="13" viewBox="0 0 13 13"><defs><linearGradient id="gcb" x1="0" y1="0" x2="0" y2="1"><stop offset="0" stop-color="#e4e4e4"/><stop offset="1" stop-color="#fafafa"/></linearGradient></defs><rect x="0.5" y="0.5" width="12" height="12" fill="url(#gcb)" stroke="#707070"/><path d="M2.3 7.2L4.6 9.8L10.5 3.4" fill="none" stroke="#5c5c5c" stroke-width="1.9"/></svg>
<svg style="position:absolute;left:841px;top:480px;" width="13" height="13" viewBox="0 0 13 13"><defs><linearGradient id="gcb" x1="0" y1="0" x2="0" y2="1"><stop offset="0" stop-color="#e4e4e4"/><stop offset="1" stop-color="#fafafa"/></linearGradient></defs><rect x="0.5" y="0.5" width="12" height="12" fill="url(#gcb)" stroke="#707070"/><path d="M2.3 7.2L4.6 9.8L10.5 3.4" fill="none" stroke="#5c5c5c" stroke-width="1.9"/></svg>
<svg style="position:absolute;left:879px;top:480px;" width="13" height="13" viewBox="0 0 13 13"><defs><linearGradient id="gcb" x1="0" y1="0" x2="0" y2="1"><stop offset="0" stop-color="#e4e4e4"/><stop offset="1" stop-color="#fafafa"/></linearGradient></defs><rect x="0.5" y="0.5" width="12" height="12" fill="url(#gcb)" stroke="#707070"/><path d="M2.3 7.2L4.6 9.8L10.5 3.4" fill="none" stroke="#5c5c5c" stroke-width="1.9"/></svg>
<svg style="position:absolute;left:917px;top:480px;" width="13" height="13" viewBox="0 0 13 13"><defs><linearGradient id="gcb" x1="0" y1="0" x2="0" y2="1"><stop offset="0" stop-color="#e4e4e4"/><stop offset="1" stop-color="#fafafa"/></linearGradient></defs><rect x="0.5" y="0.5" width="12" height="12" fill="url(#gcb)" stroke="#707070"/><path d="M2.3 7.2L4.6 9.8L10.5 3.4" fill="none" stroke="#5c5c5c" stroke-width="1.9"/></svg>
<svg style="position:absolute;left:955px;top:480px;" width="13" height="13" viewBox="0 0 13 13"><defs><linearGradient id="gcb" x1="0" y1="0" x2="0" y2="1"><stop offset="0" stop-color="#e4e4e4"/><stop offset="1" stop-color="#fafafa"/></linearGradient></defs><rect x="0.5" y="0.5" width="12" height="12" fill="url(#gcb)" stroke="#707070"/><path d="M2.3 7.2L4.6 9.8L10.5 3.4" fill="none" stroke="#5c5c5c" stroke-width="1.9"/></svg>
<div style="position:absolute;left:699px;top:477px;width:1px;height:19px;background:#b9b9b9;"></div>
<div style="position:absolute;left:751px;top:477px;width:1px;height:19px;background:#b9b9b9;"></div>
<div style="position:absolute;left:789px;top:477px;width:1px;height:19px;background:#b9b9b9;"></div>
<div style="position:absolute;left:828px;top:477px;width:1px;height:19px;background:#b9b9b9;"></div>
<div style="position:absolute;left:866px;top:477px;width:1px;height:19px;background:#b9b9b9;"></div>
<div style="position:absolute;left:904px;top:477px;width:1px;height:19px;background:#b9b9b9;"></div>
<div style="position:absolute;left:942px;top:477px;width:1px;height:19px;background:#b9b9b9;"></div>
<div style="position:absolute;left:488px;top:496px;width:493px;height:1px;background:#b9b9b9;"></div>
<svg style="position:absolute;left:719px;top:500px;" width="13" height="13" viewBox="0 0 13 13"><defs><linearGradient id="gcb" x1="0" y1="0" x2="0" y2="1"><stop offset="0" stop-color="#e4e4e4"/><stop offset="1" stop-color="#fafafa"/></linearGradient></defs><rect x="0.5" y="0.5" width="12" height="12" fill="url(#gcb)" stroke="#707070"/></svg>
<svg style="position:absolute;left:764px;top:500px;" width="13" height="13" viewBox="0 0 13 13"><defs><linearGradient id="gcb" x1="0" y1="0" x2="0" y2="1"><stop offset="0" stop-color="#e4e4e4"/><stop offset="1" stop-color="#fafafa"/></linearGradient></defs><rect x="0.5" y="0.5" width="12" height="12" fill="url(#gcb)" stroke="#707070"/><path d="M2.3 7.2L4.6 9.8L10.5 3.4" fill="none" stroke="#5c5c5c" stroke-width="1.9"/></svg>
<svg style="position:absolute;left:802px;top:500px;" width="13" height="13" viewBox="0 0 13 13"><defs><linearGradient id="gcb" x1="0" y1="0" x2="0" y2="1"><stop offset="0" stop-color="#e4e4e4"/><stop offset="1" stop-color="#fafafa"/></linearGradient></defs><rect x="0.5" y="0.5" width="12" height="12" fill="url(#gcb)" stroke="#707070"/><path d="M2.3 7.2L4.6 9.8L10.5 3.4" fill="none" stroke="#5c5c5c" stroke-width="1.9"/></svg>
<svg style="position:absolute;left:841px;top:500px;" width="13" height="13" viewBox="0 0 13 13"><defs><linearGradient id="gcb" x1="0" y1="0" x2="0" y2="1"><stop offset="0" stop-color="#e4e4e4"/><stop offset="1" stop-color="#fafafa"/></linearGradient></defs><rect x="0.5" y="0.5" width="12" height="12" fill="url(#gcb)" stroke="#707070"/><path d="M2.3 7.2L4.6 9.8L10.5 3.4" fill="none" stroke="#5c5c5c" stroke-width="1.9"/></svg>
<svg style="position:absolute;left:879px;top:500px;" width="13" height="13" viewBox="0 0 13 13"><defs><linearGradient id="gcb" x1="0" y1="0" x2="0" y2="1"><stop offset="0" stop-color="#e4e4e4"/><stop offset="1" stop-color="#fafafa"/></linearGradient></defs><rect x="0.5" y="0.5" width="12" height="12" fill="url(#gcb)" stroke="#707070"/><path d="M2.3 7.2L4.6 9.8L10.5 3.4" fill="none" stroke="#5c5c5c" stroke-width="1.9"/></svg>
<svg style="position:absolute;left:917px;top:500px;" width="13" height="13" viewBox="0 0 13 13"><defs><linearGradient id="gcb" x1="0" y1="0" x2="0" y2="1"><stop offset="0" stop-color="#e4e4e4"/><stop offset="1" stop-color="#fafafa"/></linearGradient></defs><rect x="0.5" y="0.5" width="12" height="12" fill="url(#gcb)" stroke="#707070"/><path d="M2.3 7.2L4.6 9.8L10.5 3.4" fill="none" stroke="#5c5c5c" stroke-width="1.9"/></svg>
<svg style="position:absolute;left:955px;top:500px;" width="13" height="13" viewBox="0 0 13 13"><defs><linearGradient id="gcb" x1="0" y1="0" x2="0" y2="1"><stop offset="0" stop-color="#e4e4e4"/><stop offset="1" stop-color="#fafafa"/></linearGradient></defs><rect x="0.5" y="0.5" width="12" height="12" fill="url(#gcb)" stroke="#707070"/><path d="M2.3 7.2L4.6 9.8L10.5 3.4" fill="none" stroke="#5c5c5c" stroke-width="1.9"/></svg>
<div style="position:absolute;left:699px;top:497px;width:1px;height:19px;background:#b9b9b9;"></div>
<div style="position:absolute;left:751px;top:497px;width:1px;height:19px;background:#b9b9b9;"></div>
<div style="position:absolute;left:789px;top:497px;width:1px;height:19px;background:#b9b9b9;"></div>
<div style="position:absolute;left:828px;top:497px;width:1px;height:19px;background:#b9b9b9;"></div>
<div style="position:absolute;left:866px;top:497px;width:1px;height:19px;background:#b9b9b9;"></div>
<div style="position:absolute;left:904px;top:497px;width:1px;height:19px;background:#b9b9b9;"></div>
<div style="position:absolute;left:942px;top:497px;width:1px;height:19px;background:#b9b9b9;"></div>
<div style="position:absolute;left:488px;top:516px;width:493px;height:1px;background:#b9b9b9;"></div>
<svg style="position:absolute;left:719px;top:520px;" width="13" height="13" viewBox="0 0 13 13"><defs><linearGradient id="gcb" x1="0" y1="0" x2="0" y2="1"><stop offset="0" stop-color="#e4e4e4"/><stop offset="1" stop-color="#fafafa"/></linearGradient></defs><rect x="0.5" y="0.5" width="12" height="12" fill="url(#gcb)" stroke="#707070"/><path d="M2.3 7.2L4.6 9.8L10.5 3.4" fill="none" stroke="#5c5c5c" stroke-width="1.9"/></svg>
<svg style="position:absolute;left:764px;top:520px;" width="13" height="13" viewBox="0 0 13 13"><defs><linearGradient id="gcb" x1="0" y1="0" x2="0" y2="1"><stop offset="0" stop-color="#e4e4e4"/><stop offset="1" stop-color="#fafafa"/></linearGradient></defs><rect x="0.5" y="0.5" width="12" height="12" fill="url(#gcb)" stroke="#707070"/><path d="M2.3 7.2L4.6 9.8L10.5 3.4" fill="none" stroke="#5c5c5c" stroke-width="1.9"/></svg>
<svg style="position:absolute;left:802px;top:520px;" width="13" height="13" viewBox="0 0 13 13"><defs><linearGradient id="gcb" x1="0" y1="0" x2="0" y2="1"><stop offset="0" stop-color="#e4e4e4"/><stop offset="1" stop-color="#fafafa"/></linearGradient></defs><rect x="0.5" y="0.5" width="12" height="12" fill="url(#gcb)" stroke="#707070"/></svg>
<svg style="position:absolute;left:841px;top:520px;" width="13" height="13" viewBox="0 0 13 13"><defs><linearGradient id="gcb" x1="0" y1="0" x2="0" y2="1"><stop offset="0" stop-color="#e4e4e4"/><stop offset="1" stop-color="#fafafa"/></linearGradient></defs><rect x="0.5" y="0.5" width="12" height="12" fill="url(#gcb)" stroke="#707070"/></svg>
<svg style="position:absolute;left:879px;top:520px;" width="13" height="13" viewBox="0 0 13 13"><defs><linearGradient id="gcb" x1="0" y1="0" x2="0" y2="1"><stop offset="0" stop-color="#e4e4e4"/><stop offset="1" stop-color="#fafafa"/></linearGradient></defs><rect x="0.5" y="0.5" width="12" height="12" fill="url(#gcb)" stroke="#707070"/></svg>
<svg style="position:absolute;left:917px;top:520px;" width="13" height="13" viewBox="0 0 13 13"><defs><linearGradient id="gcb" x1="0" y1="0" x2="0" y2="1"><stop offset="0" stop-color="#e4e4e4"/><stop offset="1" stop-color="#fafafa"/></linearGradient></defs><rect x="0.5" y="0.5" width="12" height="12" fill="url(#gcb)" stroke="#707070"/></svg>
<svg style="position:absolute;left:955px;top:520px;" width="13" height="13" viewBox="0 0 13 13"><defs><linearGradient id="gcb" x1="0" y1="0" x2="0" y2="1"><stop offset="0" stop-color="#e4e4e4"/><stop offset="1" stop-color="#fafafa"/></linearGradient></defs><rect x="0.5" y="0.5" width="12" height="12" fill="url(#gcb)" stroke="#707070"/></svg>
<div style="position:absolute;left:699px;top:517px;width:1px;height:19px;background:#b9b9b9;"></div>
<div style="position:absolute;left:751px;top:517px;width:1px;height:19px;background:#b9b9b9;"></div>
<div style="position:absolute;left:789px;top:517px;width:1px;height:19px;background:#b9b9b9;"></div>
<div style="position:absolute;left:828px;top:517px;width:1px;height:19px;background:#b9b9b9;"></div>
<div style="position:absolute;left:866px;top:517px;width:1px;height:19px;background:#b9b9b9;"></div>
<div style="position:absolute;left:904px;top:517px;width:1px;height:19px;background:#b9b9b9;"></div>
<div style="position:absolute;left:942px;top:517px;width:1px;height:19px;background:#b9b9b9;"></div>
<div style="position:absolute;left:488px;top:536px;width:493px;height:1px;background:#b9b9b9;"></div>
<svg style="position:absolute;left:719px;top:540px;" width="13" height="13" viewBox="0 0 13 13"><defs><linearGradient id="gcb" x1="0" y1="0" x2="0" y2="1"><stop offset="0" stop-color="#e4e4e4"/><stop offset="1" stop-color="#fafafa"/></linearGradient></defs><rect x="0.5" y="0.5" width="12" height="12" fill="url(#gcb)" stroke="#707070"/></svg>
<svg style="position:absolute;left:764px;top:540px;" width="13" height="13" viewBox="0 0 13 13"><defs><linearGradient id="gcb" x1="0" y1="0" x2="0" y2="1"><stop offset="0" stop-color="#e4e4e4"/><stop offset="1" stop-color="#fafafa"/></linearGradient></defs><rect x="0.5" y="0.5" width="12" height="12" fill="url(#gcb)" stroke="#707070"/><path d="M2.3 7.2L4.6 9.8L10.5 3.4" fill="none" stroke="#5c5c5c" stroke-width="1.9"/></svg>
<svg style="position:absolute;left:802px;top:540px;" width="13" height="13" viewBox="0 0 13 13"><defs><linearGradient id="gcb" x1="0" y1="0" x2="0" y2="1"><stop offset="0" stop-color="#e4e4e4"/><stop offset="1" stop-color="#fafafa"/></linearGradient></defs><rect x="0.5" y="0.5" width="12" height="12" fill="url(#gcb)" stroke="#707070"/><path d="M2.3 7.2L4.6 9.8L10.5 3.4" fill="none" stroke="#5c5c5c" stroke-width="1.9"/></svg>
<svg style="position:absolute;left:841px;top:540px;" width="13" height="13" viewBox="0 0 13 13"><defs><linearGradient id="gcb" x1="0" y1="0" x2="0" y2="1"><stop offset="0" stop-color="#e4e4e4"/><stop offset="1" stop-color="#fafafa"/></linearGradient></defs><rect x="0.5" y="0.5" width="12" height="12" fill="url(#gcb)" stroke="#707070"/><path d="M2.3 7.2L4.6 9.8L10.5 3.4" fill="none" stroke="#5c5c5c" stroke-width="1.9"/></svg>
<svg style="position:absolute;left:879px;top:540px;" width="13" height="13" viewBox="0 0 13 13"><defs><linearGradient id="gcb" x1="0" y1="0" x2="0" y2="1"><stop offset="0" stop-color="#e4e4e4"/><stop offset="1" stop-color="#fafafa"/></linearGradient></defs><rect x="0.5" y="0.5" width="12" height="12" fill="url(#gcb)" stroke="#707070"/><path d="M2.3 7.2L4.6 9.8L10.5 3.4" fill="none" stroke="#5c5c5c" stroke-width="1.9"/></svg>
<svg style="position:absolute;left:917px;top:540px;" width="13" height="13" viewBox="0 0 13 13"><defs><linearGradient id="gcb" x1="0" y1="0" x2="0" y2="1"><stop offset="0" stop-color="#e4e4e4"/><stop offset="1" stop-color="#fafafa"/></linearGradient></defs><rect x="0.5" y="0.5" width="12" height="12" fill="url(#gcb)" stroke="#707070"/><path d="M2.3 7.2L4.6 9.8L10.5 3.4" fill="none" stroke="#5c5c5c" stroke-width="1.9"/></svg>
<svg style="position:absolute;left:955px;top:540px;" width="13" height="13" viewBox="0 0 13 13"><defs><linearGradient id="gcb" x1="0" y1="0" x2="0" y2="1"><stop offset="0" stop-color="#e4e4e4"/><stop offset="1" stop-color="#fafafa"/></linearGradient></defs><rect x="0.5" y="0.5" width="12" height="12" fill="url(#gcb)" stroke="#707070"/><path d="M2.3 7.2L4.6 9.8L10.5 3.4" fill="none" stroke="#5c5c5c" stroke-width="1.9"/></svg>
<div style="position:absolute;left:699px;top:537px;width:1px;height:19px;background:#b9b9b9;"></div>
<div style="position:absolute;left:751px;top:537px;width:1px;height:19px;background:#b9b9b9;"></div>
<div style="position:absolute;left:789px;top:537px;width:1px;height:19px;background:#b9b9b9;"></div>
<div style="position:absolute;left:828px;top:537px;width:1px;height:19px;background:#b9b9b9;"></div>
<div style="position:absolute;left:866px;top:537px;width:1px;height:19px;background:#b9b9b9;"></div>
<div style="position:absolute;left:904px;top:537px;width:1px;height:19px;background:#b9b9b9;"></div>
<div style="position:absolute;left:942px;top:537px;width:1px;height:19px;background:#b9b9b9;"></div>
<div style="position:absolute;left:488px;top:556px;width:493px;height:1px;background:#b9b9b9;"></div>
<svg style="position:absolute;left:719px;top:560px;" width="13" height="13" viewBox="0 0 13 13"><defs><linearGradient id="gcb" x1="0" y1="0" x2="0" y2="1"><stop offset="0" stop-color="#e4e4e4"/><stop offset="1" stop-color="#fafafa"/></linearGradient></defs><rect x="0.5" y="0.5" width="12" height="12" fill="url(#gcb)" stroke="#707070"/></svg>
<svg style="position:absolute;left:764px;top:560px;" width="13" height="13" viewBox="0 0 13 13"><defs><linearGradient id="gcb" x1="0" y1="0" x2="0" y2="1"><stop offset="0" stop-color="#e4e4e4"/><stop offset="1" stop-color="#fafafa"/></linearGradient></defs><rect x="0.5" y="0.5" width="12" height="12" fill="url(#gcb)" stroke="#707070"/><path d="M2.3 7.2L4.6 9.8L10.5 3.4" fill="none" stroke="#5c5c5c" stroke-width="1.9"/></svg>
<svg style="position:absolute;left:802px;top:560px;" width="13" height="13" viewBox="0 0 13 13"><defs><linearGradient id="gcb" x1="0" y1="0" x2="0" y2="1"><stop offset="0" stop-color="#e4e4e4"/><stop offset="1" stop-color="#fafafa"/></linearGradient></defs><rect x="0.5" y="0.5" width="12" height="12" fill="url(#gcb)" stroke="#707070"/><path d="M2.3 7.2L4.6 9.8L10.5 3.4" fill="none" stroke="#5c5c5c" stroke-width="1.9"/></svg>
<svg style="position:absolute;left:841px;top:560px;" width="13" height="13" viewBox="0 0 13 13"><defs><linearGradient id="gcb" x1="0" y1="0" x2="0" y2="1"><stop offset="0" stop-color="#e4e4e4"/><stop offset="1" stop-color="#fafafa"/></linearGradient></defs><rect x="0.5" y="0.5" width="12" height="12" fill="url(#gcb)" stroke="#707070"/><path d="M2.3 7.2L4.6 9.8L10.5 3.4" fill="none" stroke="#5c5c5c" stroke-width="1.9"/></svg>
<svg style="position:absolute;left:879px;top:560px;" width="13" height="13" viewBox="0 0 13 13"><defs><linearGradient id="gcb" x1="0" y1="0" x2="0" y2="1"><stop offset="0" stop-color="#e4e4e4"/><stop offset="1" stop-color="#fafafa"/></linearGradient></defs><rect x="0.5" y="0.5" width="12" height="12" fill="url(#gcb)" stroke="#707070"/><path d="M2.3 7.2L4.6 9.8L10.5 3.4" fill="none" stroke="#5c5c5c" stroke-width="1.9"/></svg>
<svg style="position:absolute;left:917px;top:560px;" width="13" height="13" viewBox="0 0 13 13"><defs><linearGradient id="gcb" x1="0" y1="0" x2="0" y2="1"><stop offset="0" stop-color="#e4e4e4"/><stop offset="1" stop-color="#fafafa"/></linearGradient></defs><rect x="0.5" y="0.5" width="12" height="12" fill="url(#gcb)" stroke="#707070"/><path d="M2.3 7.2L4.6 9.8L10.5 3.4" fill="none" stroke="#5c5c5c" stroke-width="1.9"/></svg>
<svg style="position:absolute;left:955px;top:560px;" width="13" height="13" viewBox="0 0 13 13"><defs><linearGradient id="gcb" x1="0" y1="0" x2="0" y2="1"><stop offset="0" stop-color="#e4e4e4"/><stop offset="1" stop-color="#fafafa"/></linearGradient></defs><rect x="0.5" y="0.5" width="12" height="12" fill="url(#gcb)" stroke="#707070"/><path d="M2.3 7.2L4.6 9.8L10.5 3.4" fill="none" stroke="#5c5c5c" stroke-width="1.9"/></svg>
<div style="position:absolute;left:699px;top:557px;width:1px;height:19px;background:#b9b9b9;"></div>
<div style="position:absolute;left:751px;top:557px;width:1px;height:19px;background:#b9b9b9;"></div>
<div style="position:absolute;left:789px;top:557px;width:1px;height:19px;background:#b9b9b9;"></div>
<div style="position:absolute;left:828px;top:557px;width:1px;height:19px;background:#b9b9b9;"></div>
<div style="position:absolute;left:866px;top:557px;width:1px;height:19px;background:#b9b9b9;"></div>
<div style="position:absolute;left:904px;top:557px;width:1px;height:19px;background:#b9b9b9;"></div>
<div style="position:absolute;left:942px;top:557px;width:1px;height:19px;background:#b9b9b9;"></div>
<div style="position:absolute;left:488px;top:576px;width:493px;height:1px;background:#b9b9b9;"></div>
<svg style="position:absolute;left:719px;top:580px;" width="13" height="13" viewBox="0 0 13 13"><defs><linearGradient id="gcb" x1="0" y1="0" x2="0" y2="1"><stop offset="0" stop-color="#e4e4e4"/><stop offset="1" stop-color="#fafafa"/></linearGradient></defs><rect x="0.5" y="0.5" width="12" height="12" fill="url(#gcb)" stroke="#707070"/></svg>
<svg style="position:absolute;left:764px;top:580px;" width="13" height="13" viewBox="0 0 13 13"><defs><linearGradient id="gcb" x1="0" y1="0" x2="0" y2="1"><stop offset="0" stop-color="#e4e4e4"/><stop offset="1" stop-color="#fafafa"/></linearGradient></defs><rect x="0.5" y="0.5" width="12" height="12" fill="url(#gcb)" stroke="#707070"/><path d="M2.3 7.2L4.6 9.8L10.5 3.4" fill="none" stroke="#5c5c5c" stroke-width="1.9"/></svg>
<svg style="position:absolute;left:802px;top:580px;" width="13" height="13" viewBox="0 0 13 13"><defs><linearGradient id="gcb" x1="0" y1="0" x2="0" y2="1"><stop offset="0" stop-color="#e4e4e4"/><stop offset="1" stop-color="#fafafa"/></linearGradient></defs><rect x="0.5" y="0.5" width="12" height="12" fill="url(#gcb)" stroke="#707070"/><path d="M2.3 7.2L4.6 9.8L10.5 3.4" fill="none" stroke="#5c5c5c" stroke-width="1.9"/></svg>
<svg style="position:absolute;left:841px;top:580px;" width="13" height="13" viewBox="0 0 13 13"><defs><linearGradient id="gcb" x1="0" y1="0" x2="0" y2="1"><stop offset="0" stop-color="#e4e4e4"/><stop offset="1" stop-color="#fafafa"/></linearGradient></defs><rect x="0.5" y="0.5" width="12" height="12" fill="url(#gcb)" stroke="#707070"/><path d="M2.3 7.2L4.6 9.8L10.5 3.4" fill="none" stroke="#5c5c5c" stroke-width="1.9"/></svg>
<svg style="position:absolute;left:879px;top:580px;" width="13" height="13" viewBox="0 0 13 13"><defs><linearGradient id="gcb" x1="0" y1="0" x2="0" y2="1"><stop offset="0" stop-color="#e4e4e4"/><stop offset="1" stop-color="#fafafa"/></linearGradient></defs><rect x="0.5" y="0.5" width="12" height="12" fill="url(#gcb)" stroke="#707070"/><path d="M2.3 7.2L4.6 9.8L10.5 3.4" fill="none" stroke="#5c5c5c" stroke-width="1.9"/></svg>
<svg style="position:absolute;left:917px;top:580px;" width="13" height="13" viewBox="0 0 13 13"><defs><linearGradient id="gcb" x1="0" y1="0" x2="0" y2="1"><stop offset="0" stop-color="#e4e4e4"/><stop offset="1" stop-color="#fafafa"/></linearGradient></defs><rect x="0.5" y="0.5" width="12" height="12" fill="url(#gcb)" stroke="#707070"/><path d="M2.3 7.2L4.6 9.8L10.5 3.4" fill="none" stroke="#5c5c5c" stroke-width="1.9"/></svg>
<svg style="position:absolute;left:955px;top:580px;" width="13" height="13" viewBox="0 0 13 13"><defs><linearGradient id="gcb" x1="0" y1="0" x2="0" y2="1"><stop offset="0" stop-color="#e4e4e4"/><stop offset="1" stop-color="#fafafa"/></linearGradient></defs><rect x="0.5" y="0.5" width="12" height="12" fill="url(#gcb)" stroke="#707070"/><path d="M2.3 7.2L4.6 9.8L10.5 3.4" fill="none" stroke="#5c5c5c" stroke-width="1.9"/></svg>
<div style="position:absolute;left:699px;top:577px;width:1px;height:19px;background:#b9b9b9;"></div>
<div style="position:absolute;left:751px;top:577px;width:1px;height:19px;background:#b9b9b9;"></div>
<div style="position:absolute;left:789px;top:577px;width:1px;height:19px;background:#b9b9b9;"></div>
<div style="position:absolute;left:828px;top:577px;width:1px;height:19px;background:#b9b9b9;"></div>
<div style="position:absolute;left:866px;top:577px;width:1px;height:19px;background:#b9b9b9;"></div>
<div style="position:absolute;left:904px;top:577px;width:1px;height:19px;background:#b9b9b9;"></div>
<div style="position:absolute;left:942px;top:577px;width:1px;height:19px;background:#b9b9b9;"></div>
<div style="position:absolute;left:488px;top:596px;width:493px;height:1px;background:#b9b9b9;"></div>
<svg style="position:absolute;left:719px;top:600px;" width="13" height="13" viewBox="0 0 13 13"><defs><linearGradient id="gcb" x1="0" y1="0" x2="0" y2="1"><stop offset="0" stop-color="#e4e4e4"/><stop offset="1" stop-color="#fafafa"/></linearGradient></defs><rect x="0.5" y="0.5" width="12" height="12" fill="url(#gcb)" stroke="#707070"/></svg>
<svg style="position:absolute;left:764px;top:600px;" width="13" height="13" viewBox="0 0 13 13"><defs><linearGradient id="gcb" x1="0" y1="0" x2="0" y2="1"><stop offset="0" stop-color="#e4e4e4"/><stop offset="1" stop-color="#fafafa"/></linearGradient></defs><rect x="0.5" y="0.5" width="12" height="12" fill="url(#gcb)" stroke="#707070"/><path d="M2.3 7.2L4.6 9.8L10.5 3.4" fill="none" stroke="#5c5c5c" stroke-width="1.9"/></svg>
<svg style="position:absolute;left:802px;top:600px;" width="13" height="13" viewBox="0 0 13 13"><defs><linearGradient id="gcb" x1="0" y1="0" x2="0" y2="1"><stop offset="0" stop-color="#e4e4e4"/><stop offset="1" stop-color="#fafafa"/></linearGradient></defs><rect x="0.5" y="0.5" width="12" height="12" fill="url(#gcb)" stroke="#707070"/><path d="M2.3 7.2L4.6 9.8L10.5 3.4" fill="none" stroke="#5c5c5c" stroke-width="1.9"/></svg>
<svg style="position:absolute;left:841px;top:600px;" width="13" height="13" viewBox="0 0 13 13"><defs><linearGradient id="gcb" x1="0" y1="0" x2="0" y2="1"><stop offset="0" stop-color="#e4e4e4"/><stop offset="1" stop-color="#fafafa"/></linearGradient></defs><rect x="0.5" y="0.5" width="12" height="12" fill="url(#gcb)" stroke="#707070"/><path d="M2.3 7.2L4.6 9.8L10.5 3.4" fill="none" stroke="#5c5c5c" stroke-width="1.9"/></svg>
<svg style="position:absolute;left:879px;top:600px;" width="13" height="13" viewBox="0 0 13 13"><defs><linearGradient id="gcb" x1="0" y1="0" x2="0" y2="1"><stop offset="0" stop-color="#e4e4e4"/><stop offset="1" stop-color="#fafafa"/></linearGradient></defs><rect x="0.5" y="0.5" width="12" height="12" fill="url(#gcb)" stroke="#707070"/><path d="M2.3 7.2L4.6 9.8L10.5 3.4" fill="none" stroke="#5c5c5c" stroke-width="1.9"/></svg>
<svg style="position:absolute;left:917px;top:600px;" width="13" height="13" viewBox="0 0 13 13"><defs><linearGradient id="gcb" x1="0" y1="0" x2="0" y2="1"><stop offset="0" stop-color="#e4e4e4"/><stop offset="1" stop-color="#fafafa"/></linearGradient></defs><rect x="0.5" y="0.5" width="12" height="12" fill="url(#gcb)" stroke="#707070"/><path d="M2.3 7.2L4.6 9.8L10.5 3.4" fill="none" stroke="#5c5c5c" stroke-width="1.9"/></svg>
<svg style="position:absolute;left:955px;top:600px;" width="13" height="13" viewBox="0 0 13 13"><defs><linearGradient id="gcb" x1="0" y1="0" x2="0" y2="1"><stop offset="0" stop-color="#e4e4e4"/><stop offset="1" stop-color="#fafafa"/></linearGradient></defs><rect x="0.5" y="0.5" width="12" height="12" fill="url(#gcb)" stroke="#707070"/><path d="M2.3 7.2L4.6 9.8L10.5 3.4" fill="none" stroke="#5c5c5c" stroke-width="1.9"/></svg>
<div style="position:absolute;left:699px;top:597px;width:1px;height:19px;background:#b9b9b9;"></div>
<div style="position:absolute;left:751px;top:597px;width:1px;height:19px;background:#b9b9b9;"></div>
<div style="position:absolute;left:789px;top:597px;width:1px;height:19px;background:#b9b9b9;"></div>
<div style="position:absolute;left:828px;top:597px;width:1px;height:19px;background:#b9b9b9;"></div>
<div style="position:absolute;left:866px;top:597px;width:1px;height:19px;background:#b9b9b9;"></div>
<div style="position:absolute;left:904px;top:597px;width:1px;height:19px;background:#b9b9b9;"></div>
<div style="position:absolute;left:942px;top:597px;width:1px;height:19px;background:#b9b9b9;"></div>
<div style="position:absolute;left:488px;top:616px;width:493px;height:1px;background:#b9b9b9;"></div>
<svg style="position:absolute;left:502px;top:639px;" width="14" height="14" viewBox="0 0 14 14"><circle cx="7" cy="7.5" r="6" fill="none" stroke="#444" stroke-width="1.2"/><path d="M4.6 5.1L9 9.5M9.2 6V9.6H5.6" fill="none" stroke="#444" stroke-width="1.2"/></svg>
<div style="position:absolute;left:488px;top:656px;width:10px;height:1px;background:#b9b9b9;"></div>
<div style="position:absolute;left:498px;top:655px;width:483px;height:2px;background:#b9b9b9;"></div>
<svg style="position:absolute;left:719px;top:660px;" width="13" height="13" viewBox="0 0 13 13"><defs><linearGradient id="gcb" x1="0" y1="0" x2="0" y2="1"><stop offset="0" stop-color="#e4e4e4"/><stop offset="1" stop-color="#fafafa"/></linearGradient></defs><rect x="0.5" y="0.5" width="12" height="12" fill="url(#gcb)" stroke="#707070"/></svg>
<svg style="position:absolute;left:764px;top:660px;" width="13" height="13" viewBox="0 0 13 13"><defs><linearGradient id="gcb" x1="0" y1="0" x2="0" y2="1"><stop offset="0" stop-color="#e4e4e4"/><stop offset="1" stop-color="#fafafa"/></linearGradient></defs><rect x="0.5" y="0.5" width="12" height="12" fill="url(#gcb)" stroke="#707070"/><path d="M2.3 7.2L4.6 9.8L10.5 3.4" fill="none" stroke="#5c5c5c" stroke-width="1.9"/></svg>
<svg style="position:absolute;left:802px;top:660px;" width="13" height="13" viewBox="0 0 13 13"><defs><linearGradient id="gcb" x1="0" y1="0" x2="0" y2="1"><stop offset="0" stop-color="#e4e4e4"/><stop offset="1" stop-color="#fafafa"/></linearGradient></defs><rect x="0.5" y="0.5" width="12" height="12" fill="url(#gcb)" stroke="#707070"/><path d="M2.3 7.2L4.6 9.8L10.5 3.4" fill="none" stroke="#5c5c5c" stroke-width="1.9"/></svg>
<svg style="position:absolute;left:841px;top:660px;" width="13" height="13" viewBox="0 0 13 13"><defs><linearGradient id="gcb" x1="0" y1="0" x2="0" y2="1"><stop offset="0" stop-color="#e4e4e4"/><stop offset="1" stop-color="#fafafa"/></linearGradient></defs><rect x="0.5" y="0.5" width="12" height="12" fill="url(#gcb)" stroke="#707070"/><path d="M2.3 7.2L4.6 9.8L10.5 3.4" fill="none" stroke="#5c5c5c" stroke-width="1.9"/></svg>
<svg style="position:absolute;left:879px;top:660px;" width="13" height="13" viewBox="0 0 13 13"><defs><linearGradient id="gcb" x1="0" y1="0" x2="0" y2="1"><stop offset="0" stop-color="#e4e4e4"/><stop offset="1" stop-color="#fafafa"/></linearGradient></defs><rect x="0.5" y="0.5" width="12" height="12" fill="url(#gcb)" stroke="#707070"/><path d="M2.3 7.2L4.6 9.8L10.5 3.4" fill="none" stroke="#5c5c5c" stroke-width="1.9"/></svg>
<svg style="position:absolute;left:917px;top:660px;" width="13" height="13" viewBox="0 0 13 13"><defs><linearGradient id="gcb" x1="0" y1="0" x2="0" y2="1"><stop offset="0" stop-color="#e4e4e4"/><stop offset="1" stop-color="#fafafa"/></linearGradient></defs><rect x="0.5" y="0.5" width="12" height="12" fill="url(#gcb)" stroke="#707070"/><path d="M2.3 7.2L4.6 9.8L10.5 3.4" fill="none" stroke="#5c5c5c" stroke-width="1.9"/></svg>
<svg style="position:absolute;left:955px;top:660px;" width="13" height="13" viewBox="0 0 13 13"><defs><linearGradient id="gcb" x1="0" y1="0" x2="0" y2="1"><stop offset="0" stop-color="#e4e4e4"/><stop offset="1" stop-color="#fafafa"/></linearGradient></defs><rect x="0.5" y="0.5" width="12" height="12" fill="url(#gcb)" stroke="#707070"/><path d="M2.3 7.2L4.6 9.8L10.5 3.4" fill="none" stroke="#5c5c5c" stroke-width="1.9"/></svg>
<div style="position:absolute;left:699px;top:657px;width:1px;height:19px;background:#b9b9b9;"></div>
<div style="position:absolute;left:751px;top:657px;width:1px;height:19px;background:#b9b9b9;"></div>
<div style="position:absolute;left:789px;top:657px;width:1px;height:19px;background:#b9b9b9;"></div>
<div style="position:absolute;left:828px;top:657px;width:1px;height:19px;background:#b9b9b9;"></div>
<div style="position:absolute;left:866px;top:657px;width:1px;height:19px;background:#b9b9b9;"></div>
<div style="position:absolute;left:904px;top:657px;width:1px;height:19px;background:#b9b9b9;"></div>
<div style="position:absolute;left:942px;top:657px;width:1px;height:19px;background:#b9b9b9;"></div>
<div style="position:absolute;left:488px;top:676px;width:493px;height:1px;background:#b9b9b9;"></div>
<svg style="position:absolute;left:719px;top:680px;" width="13" height="13" viewBox="0 0 13 13"><defs><linearGradient id="gcb" x1="0" y1="0" x2="0" y2="1"><stop offset="0" stop-color="#e4e4e4"/><stop offset="1" stop-color="#fafafa"/></linearGradient></defs><rect x="0.5" y="0.5" width="12" height="12" fill="url(#gcb)" stroke="#707070"/><path d="M2.3 7.2L4.6 9.8L10.5 3.4" fill="none" stroke="#5c5c5c" stroke-width="1.9"/></svg>
<svg style="position:absolute;left:764px;top:680px;" width="13" height="13" viewBox="0 0 13 13"><defs><linearGradient id="gcb" x1="0" y1="0" x2="0" y2="1"><stop offset="0" stop-color="#e4e4e4"/><stop offset="1" stop-color="#fafafa"/></linearGradient></defs><rect x="0.5" y="0.5" width="12" height="12" fill="url(#gcb)" stroke="#707070"/><path d="M2.3 7.2L4.6 9.8L10.5 3.4" fill="none" stroke="#5c5c5c" stroke-width="1.9"/></svg>
<svg style="position:absolute;left:802px;top:680px;" width="13" height="13" viewBox="0 0 13 13"><defs><linearGradient id="gcb" x1="0" y1="0" x2="0" y2="1"><stop offset="0" stop-color="#e4e4e4"/><stop offset="1" stop-color="#fafafa"/></linearGradient></defs><rect x="0.5" y="0.5" width="12" height="12" fill="url(#gcb)" stroke="#707070"/></svg>
<svg style="position:absolute;left:841px;top:680px;" width="13" height="13" viewBox="0 0 13 13"><defs><linearGradient id="gcb" x1="0" y1="0" x2="0" y2="1"><stop offset="0" stop-color="#e4e4e4"/><stop offset="1" stop-color="#fafafa"/></linearGradient></defs><rect x="0.5" y="0.5" width="12" height="12" fill="url(#gcb)" stroke="#707070"/></svg>
<svg style="position:absolute;left:879px;top:680px;" width="13" height="13" viewBox="0 0 13 13"><defs><linearGradient id="gcb" x1="0" y1="0" x2="0" y2="1"><stop offset="0" stop-color="#e4e4e4"/><stop offset="1" stop-color="#fafafa"/></linearGradient></defs><rect x="0.5" y="0.5" width="12" height="12" fill="url(#gcb)" stroke="#707070"/></svg>
<svg style="position:absolute;left:917px;top:680px;" width="13" height="13" viewBox="0 0 13 13"><defs><linearGradient id="gcb" x1="0" y1="0" x2="0" y2="1"><stop offset="0" stop-color="#e4e4e4"/><stop offset="1" stop-color="#fafafa"/></linearGradient></defs><rect x="0.5" y="0.5" width="12" height="12" fill="url(#gcb)" stroke="#707070"/></svg>
<svg style="position:absolute;left:955px;top:680px;" width="13" height="13" viewBox="0 0 13 13"><defs><linearGradient id="gcb" x1="0" y1="0" x2="0" y2="1"><stop offset="0" stop-color="#e4e4e4"/><stop offset="1" stop-color="#fafafa"/></linearGradient></defs><rect x="0.5" y="0.5" width="12" height="12" fill="url(#gcb)" stroke="#707070"/></svg>
<div style="position:absolute;left:699px;top:677px;width:1px;height:19px;background:#b9b9b9;"></div>
<div style="position:absolute;left:751px;top:677px;width:1px;height:19px;background:#b9b9b9;"></div>
<div style="position:absolute;left:789px;top:677px;width:1px;height:19px;background:#b9b9b9;"></div>
<div style="position:absolute;left:828px;top:677px;width:1px;height:19px;background:#b9b9b9;"></div>
<div style="position:absolute;left:866px;top:677px;width:1px;height:19px;background:#b9b9b9;"></div>
<div style="position:absolute;left:904px;top:677px;width:1px;height:19px;background:#b9b9b9;"></div>
<div style="position:absolute;left:942px;top:677px;width:1px;height:19px;background:#b9b9b9;"></div>
<svg style="position:absolute;left:986px;top:244px;" width="8" height="5" viewBox="0 0 8 5"><path d="M0.5 4H7.5L4 0.5Z" fill="#8a8a8a"/></svg>
<div style="position:absolute;left:986px;top:255px;width:8px;height:118px;background:#bdbdbd;"></div>
<svg style="position:absolute;left:986px;top:686px;" width="8" height="4" viewBox="0 0 8 4"><path d="M0.5 0.5H7.5L4 3.5Z" fill="#8a8a8a"/></svg>
<div style="position:absolute;left:117px;top:730px;width:1px;height:19px;background:#b5b5b5;"></div>
<div style="position:absolute;left:472px;top:730px;width:1px;height:19px;background:#b5b5b5;"></div>
<div style="position:absolute;left:757px;top:730px;width:1px;height:19px;background:#b5b5b5;"></div>
<div style="position:absolute;left:842px;top:730px;width:1px;height:19px;background:#b5b5b5;"></div>
<div style="position:absolute;left:897px;top:730px;width:1px;height:19px;background:#b5b5b5;"></div>
<div style="position:absolute;left:952px;top:730px;width:1px;height:19px;background:#b5b5b5;"></div>
<svg style="position:absolute;left:994px;top:737px;" width="13" height="13" viewBox="0 0 13 13"><g fill="#6a6a6a"><rect x="9.0" y="2.0" width="3" height="1"/><rect x="10.0" y="1.0" width="1" height="3"/><rect x="5.0" y="6.0" width="3" height="1"/><rect x="6.0" y="5.0" width="1" height="3"/><rect x="9.0" y="6.0" width="3" height="1"/><rect x="10.0" y="5.0" width="1" height="3"/><rect x="1.0" y="10.0" width="3" height="1"/><rect x="2.0" y="9.0" width="1" height="3"/><rect x="5.0" y="10.0" width="3" height="1"/><rect x="6.0" y="9.0" width="1" height="3"/><rect x="9.0" y="10.0" width="3" height="1"/><rect x="10.0" y="9.0" width="1" height="3"/></g></svg>
<div style="position:absolute;left:40.54px;top:19.18px;font-size:15.5px;line-height:15.5px;font-weight:400;color:#1a93e6;white-space:nowrap;transform-origin:0 0;transform:scaleX(1.0082);">Administrador de Usuarios - SoftMant 1.0.0 Build 0 Avanzado</div>
<div style="position:absolute;left:22.80px;top:54.24px;font-size:12px;line-height:12px;font-weight:400;color:#2a2a2a;white-space:nowrap;transform-origin:0 0;transform:scaleX(1.0198);">Menú Principal</div>
<div style="position:absolute;left:115.15px;top:54.24px;font-size:12px;line-height:12px;font-weight:400;color:#2a2a2a;white-space:nowrap;transform-origin:0 0;transform:scaleX(0.9537);">Editar</div>
<div style="position:absolute;left:157.43px;top:54.24px;font-size:12px;line-height:12px;font-weight:400;color:#2a2a2a;white-space:nowrap;transform-origin:0 0;transform:scaleX(0.8723);">Ver</div>
<div style="position:absolute;left:184.72px;top:54.24px;font-size:12px;line-height:12px;font-weight:400;color:#2a2a2a;white-space:nowrap;transform-origin:0 0;transform:scaleX(0.9974);">Herramientas</div>
<div style="position:absolute;left:268.84px;top:54.24px;font-size:12px;line-height:12px;font-weight:400;color:#2a2a2a;white-space:nowrap;transform-origin:0 0;transform:scaleX(0.9339);">Ventana</div>
<div style="position:absolute;left:322.06px;top:54.24px;font-size:12px;line-height:12px;font-weight:400;color:#a8a8a8;white-space:nowrap;transform-origin:0 0;transform:scaleX(0.9705);">Guiones</div>
<div style="position:absolute;left:377.74px;top:54.24px;font-size:12px;line-height:12px;font-weight:400;color:#2a2a2a;white-space:nowrap;transform-origin:0 0;transform:scaleX(0.9820);">Ayuda</div>
<div style="position:absolute;left:100.30px;top:79.04px;font-size:12px;line-height:12px;font-weight:400;color:#2a2a2a;white-space:nowrap;transform-origin:0 0;transform:scaleX(0.9601);">Interasystem 2014</div>
<div style="position:absolute;left:475.83px;top:79.04px;font-size:12px;line-height:12px;font-weight:400;color:#2a2a2a;white-space:nowrap;transform-origin:0 0;transform:scaleX(0.9815);">Localización:</div>
<div style="position:absolute;left:549.67px;top:79.04px;font-size:12px;line-height:12px;font-weight:400;color:#2a2a2a;white-space:nowrap;transform-origin:0 0;transform:scaleX(1.0253);">[Todas]</div>
<div style="position:absolute;left:786.66px;top:79.04px;font-size:12px;line-height:12px;font-weight:400;color:#2a2a2a;white-space:nowrap;transform-origin:0 0;transform:scaleX(0.9526);">Repuestos:</div>
<div style="position:absolute;left:850.74px;top:79.04px;font-size:12px;line-height:12px;font-weight:400;color:#ababab;white-space:nowrap;transform-origin:0 0;transform:scaleX(0.9061);">ALMACÉN GENERAL</div>
<div style="position:absolute;left:82.74px;top:111.64px;font-size:12px;line-height:12px;font-weight:400;color:#2a2a2a;white-space:nowrap;transform-origin:0 0;transform:scaleX(0.9979);">Catálogos</div>
<div style="position:absolute;left:162.17px;top:111.64px;font-size:12px;line-height:12px;font-weight:400;color:#2a2a2a;white-space:nowrap;transform-origin:0 0;transform:scaleX(1.0531);">Mantenimiento</div>
<div style="position:absolute;left:272.24px;top:111.64px;font-size:12px;line-height:12px;font-weight:400;color:#2a2a2a;white-space:nowrap;transform-origin:0 0;transform:scaleX(0.9692);">Almacén de Repuestos</div>
<div style="position:absolute;left:419.34px;top:111.64px;font-size:12px;line-height:12px;font-weight:400;color:#2a2a2a;white-space:nowrap;transform-origin:0 0;transform:scaleX(0.9885);">Almacén de Herramientas</div>
<div style="position:absolute;left:583.44px;top:111.64px;font-size:12px;line-height:12px;font-weight:400;color:#2a2a2a;white-space:nowrap;transform-origin:0 0;transform:scaleX(0.9622);">Analizadores</div>
<div style="position:absolute;left:72.46px;top:159.47px;font-size:11.5px;line-height:11.5px;font-weight:700;color:#2c3342;white-space:nowrap;transform-origin:0 0;transform:scaleX(1.0216);">Catálogos</div>
<div style="position:absolute;left:77.92px;top:198.69px;font-size:11px;line-height:11px;font-weight:400;color:#2d3443;white-space:nowrap;transform-origin:0 0;transform:scaleX(0.9362);">Localizaciones</div>
<div style="position:absolute;left:77.92px;top:228.69px;font-size:11px;line-height:11px;font-weight:400;color:#2d3443;white-space:nowrap;transform-origin:0 0;transform:scaleX(0.9442);">Equipos</div>
<div style="position:absolute;left:78.73px;top:258.69px;font-size:11px;line-height:11px;font-weight:400;color:#2d3443;white-space:nowrap;transform-origin:0 0;transform:scaleX(0.9195);">Vehículos</div>
<div style="position:absolute;left:77.81px;top:288.69px;font-size:11px;line-height:11px;font-weight:400;color:#2d3443;white-space:nowrap;transform-origin:0 0;transform:scaleX(0.9802);">Inmuebles</div>
<div style="position:absolute;left:78.74px;top:318.69px;font-size:11px;line-height:11px;font-weight:400;color:#2d3443;white-space:nowrap;transform-origin:0 0;transform:scaleX(0.9675);">Areas</div>
<div style="position:absolute;left:77.92px;top:348.69px;font-size:11px;line-height:11px;font-weight:400;color:#2d3443;white-space:nowrap;transform-origin:0 0;transform:scaleX(0.9395);">Empleados</div>
<div style="position:absolute;left:78.74px;top:378.69px;font-size:11px;line-height:11px;font-weight:400;color:#2d3443;white-space:nowrap;transform-origin:0 0;transform:scaleX(0.9489);">Auxiliares</div>
<div style="position:absolute;left:77.88px;top:408.69px;font-size:11px;line-height:11px;font-weight:400;color:#2d3443;white-space:nowrap;transform-origin:0 0;transform:scaleX(0.9830);">Proveedores</div>
<div style="position:absolute;left:78.11px;top:438.69px;font-size:11px;line-height:11px;font-weight:400;color:#2d3443;white-space:nowrap;transform-origin:0 0;transform:scaleX(0.9325);">Cambios a Localizaciones</div>
<div style="position:absolute;left:72.48px;top:478.67px;font-size:11.5px;line-height:11.5px;font-weight:700;color:#2c3342;white-space:nowrap;transform-origin:0 0;transform:scaleX(1.0687);">Mantenimiento</div>
<div style="position:absolute;left:72.81px;top:511.67px;font-size:11.5px;line-height:11.5px;font-weight:700;color:#2c3342;white-space:nowrap;transform-origin:0 0;transform:scaleX(0.9937);">Análisis y Gráficas</div>
<div style="position:absolute;left:72.78px;top:544.67px;font-size:11.5px;line-height:11.5px;font-weight:700;color:#2c3342;white-space:nowrap;transform-origin:0 0;transform:scaleX(0.9902);">Consumos</div>
<div style="position:absolute;left:72.76px;top:577.67px;font-size:11.5px;line-height:11.5px;font-weight:700;color:#2c3342;white-space:nowrap;transform-origin:0 0;transform:scaleX(1.0198);">Calendarios</div>
<div style="position:absolute;left:72.50px;top:610.67px;font-size:11.5px;line-height:11.5px;font-weight:700;color:#2c3342;white-space:nowrap;transform-origin:0 0;transform:scaleX(1.0403);">Repuestos</div>
<div style="position:absolute;left:72.48px;top:643.67px;font-size:11.5px;line-height:11.5px;font-weight:700;color:#2c3342;white-space:nowrap;transform-origin:0 0;transform:scaleX(1.0755);">Herramientas</div>
<div style="position:absolute;left:270.84px;top:150.66px;font-size:18px;line-height:18px;font-weight:400;color:#3ea6ee;white-space:nowrap;transform-origin:0 0;transform:scaleX(0.9884);">Administrador de Usuarios</div>
<div style="position:absolute;left:249.96px;top:218.24px;font-size:12px;line-height:12px;font-weight:400;color:#444;white-space:nowrap;transform-origin:0 0;transform:scaleX(0.8742);">Usuarios</div>
<div style="position:absolute;left:309.12px;top:218.34px;font-size:12px;line-height:12px;font-weight:400;color:#1a8fe3;white-space:nowrap;transform-origin:0 0;transform:scaleX(0.8787);">Grupo de Usuarios</div>
<div style="position:absolute;left:354.12px;top:242.34px;font-size:12px;line-height:12px;font-weight:400;color:#303030;white-space:nowrap;transform-origin:0 0;transform:scaleX(0.8752);">Grupo</div>
<div style="position:absolute;left:255.79px;top:260.14px;font-size:12px;line-height:12px;font-weight:400;color:#fff;white-space:nowrap;transform-origin:0 0;transform:scaleX(0.9180);">Producción</div>
<div style="position:absolute;left:571.10px;top:242.44px;font-size:12px;line-height:12px;font-weight:400;color:#303030;white-space:nowrap;transform-origin:0 0;transform:scaleX(0.9048);">Descripcion</div>
<div style="position:absolute;left:703.09px;top:242.44px;font-size:12px;line-height:12px;font-weight:400;color:#303030;white-space:nowrap;transform-origin:0 0;transform:scaleX(0.8822);">SoloEje...</div>
<div style="position:absolute;left:754.79px;top:242.44px;font-size:12px;line-height:12px;font-weight:400;color:#303030;white-space:nowrap;transform-origin:0 0;transform:scaleX(0.9190);">Ejec...</div>
<div style="position:absolute;left:800.03px;top:242.44px;font-size:12px;line-height:12px;font-weight:400;color:#303030;white-space:nowrap;transform-origin:0 0;transform:scaleX(0.8751);">Alta</div>
<div style="position:absolute;left:836.80px;top:242.44px;font-size:12px;line-height:12px;font-weight:400;color:#303030;white-space:nowrap;transform-origin:0 0;transform:scaleX(0.9056);">Baja</div>
<div style="position:absolute;left:869.93px;top:242.44px;font-size:12px;line-height:12px;font-weight:400;color:#303030;white-space:nowrap;transform-origin:0 0;transform:scaleX(0.8701);">Cam...</div>
<div style="position:absolute;left:908.58px;top:242.44px;font-size:12px;line-height:12px;font-weight:400;color:#303030;white-space:nowrap;transform-origin:0 0;transform:scaleX(0.9217);">Rep...</div>
<div style="position:absolute;left:946.02px;top:242.44px;font-size:12px;line-height:12px;font-weight:400;color:#303030;white-space:nowrap;transform-origin:0 0;transform:scaleX(0.8755);">Grafi...</div>
<div style="position:absolute;left:521.92px;top:281.44px;font-size:12px;line-height:12px;font-weight:400;color:#fff;white-space:nowrap;transform-origin:0 0;transform:scaleX(0.8774);">Propietario :</div>
<div style="position:absolute;left:501.43px;top:301.34px;font-size:12px;line-height:12px;font-weight:400;color:#303030;white-space:nowrap;transform-origin:0 0;transform:scaleX(0.8723);">Analizador de Costos</div>
<div style="position:absolute;left:521.93px;top:341.44px;font-size:12px;line-height:12px;font-weight:400;color:#8c8c8c;white-space:nowrap;transform-origin:0 0;transform:scaleX(0.8714);">Propietario : Analisis y Graficas</div>
<div style="position:absolute;left:500.61px;top:361.34px;font-size:12px;line-height:12px;font-weight:400;color:#303030;white-space:nowrap;transform-origin:0 0;transform:scaleX(0.8875);">Falla Causa Raíz</div>
<div style="position:absolute;left:500.58px;top:381.34px;font-size:12px;line-height:12px;font-weight:400;color:#303030;white-space:nowrap;transform-origin:0 0;transform:scaleX(0.8817);">Indicadores KPI</div>
<div style="position:absolute;left:521.93px;top:421.44px;font-size:12px;line-height:12px;font-weight:400;color:#8c8c8c;white-space:nowrap;transform-origin:0 0;transform:scaleX(0.8742);">Propietario : Catálogos</div>
<div style="position:absolute;left:500.83px;top:441.34px;font-size:12px;line-height:12px;font-weight:400;color:#303030;white-space:nowrap;transform-origin:0 0;transform:scaleX(0.8724);">Catálogo de Auxiliares</div>
<div style="position:absolute;left:500.82px;top:461.34px;font-size:12px;line-height:12px;font-weight:400;color:#303030;white-space:nowrap;transform-origin:0 0;transform:scaleX(0.8770);">Catálogo de Empleados</div>
<div style="position:absolute;left:500.82px;top:481.34px;font-size:12px;line-height:12px;font-weight:400;color:#303030;white-space:nowrap;transform-origin:0 0;transform:scaleX(0.8795);">Catálogo de Equipos</div>
<div style="position:absolute;left:500.82px;top:501.34px;font-size:12px;line-height:12px;font-weight:400;color:#303030;white-space:nowrap;transform-origin:0 0;transform:scaleX(0.8750);">Catálogo de Inmuebles</div>
<div style="position:absolute;left:500.81px;top:521.34px;font-size:12px;line-height:12px;font-weight:400;color:#303030;white-space:nowrap;transform-origin:0 0;transform:scaleX(0.8882);">Catálogo de Localizaciones</div>
<div style="position:absolute;left:500.82px;top:541.34px;font-size:12px;line-height:12px;font-weight:400;color:#303030;white-space:nowrap;transform-origin:0 0;transform:scaleX(0.8805);">Catálogo de Proveedores Externos</div>
<div style="position:absolute;left:500.81px;top:561.34px;font-size:12px;line-height:12px;font-weight:400;color:#303030;white-space:nowrap;transform-origin:0 0;transform:scaleX(0.8902);">Cátalogo de Vehiculos</div>
<div style="position:absolute;left:500.82px;top:581.34px;font-size:12px;line-height:12px;font-weight:400;color:#303030;white-space:nowrap;transform-origin:0 0;transform:scaleX(0.8814);">Catalogos de Areas</div>
<div style="position:absolute;left:501.43px;top:601.34px;font-size:12px;line-height:12px;font-weight:400;color:#303030;white-space:nowrap;transform-origin:0 0;transform:scaleX(0.8903);">Tranferencia de Equipos y Vehiculos</div>
<div style="position:absolute;left:521.93px;top:641.44px;font-size:12px;line-height:12px;font-weight:400;color:#8c8c8c;white-space:nowrap;transform-origin:0 0;transform:scaleX(0.8633);">Propietario : Consumos</div>
<div style="position:absolute;left:500.83px;top:661.34px;font-size:12px;line-height:12px;font-weight:400;color:#303030;white-space:nowrap;transform-origin:0 0;transform:scaleX(0.8687);">Consumos de OTS</div>
<div style="position:absolute;left:500.63px;top:681.34px;font-size:12px;line-height:12px;font-weight:400;color:#303030;white-space:nowrap;transform-origin:0 0;transform:scaleX(0.8655);">Historial de Consumos</div>
<div style="position:absolute;left:254.12px;top:708.29px;font-size:11px;line-height:11px;font-weight:400;color:#2d3443;white-space:nowrap;transform-origin:0 0;transform:scaleX(0.9810);">Total 1 Registros</div>
<div style="position:absolute;left:512.32px;top:708.09px;font-size:11px;line-height:11px;font-weight:400;color:#2d3443;white-space:nowrap;transform-origin:0 0;transform:scaleX(0.9810);">Total 0 Registros</div>
<div style="position:absolute;left:122.58px;top:734.99px;font-size:11px;line-height:11px;font-weight:400;color:#2d3443;white-space:nowrap;transform-origin:0 0;transform:scaleX(0.9869);">Empresa: Aditamentos metalicos del centro S.A. de C.V.</div>
<div style="position:absolute;left:475.74px;top:734.99px;font-size:11px;line-height:11px;font-weight:400;color:#2d3443;white-space:nowrap;transform-origin:0 0;transform:scaleX(0.9513);">Administrador: MIGUEL()</div>
<div style="position:absolute;left:760.84px;top:734.99px;font-size:11px;line-height:11px;font-weight:400;color:#2d3443;white-space:nowrap;transform-origin:0 0;transform:scaleX(0.9536);">Access 2000</div>
<div style="position:absolute;left:955.74px;top:734.99px;font-size:11px;line-height:11px;font-weight:400;color:#a0a0a0;white-space:nowrap;transform-origin:0 0;transform:scaleX(0.8938);">CAPS</div>
</body></html>
